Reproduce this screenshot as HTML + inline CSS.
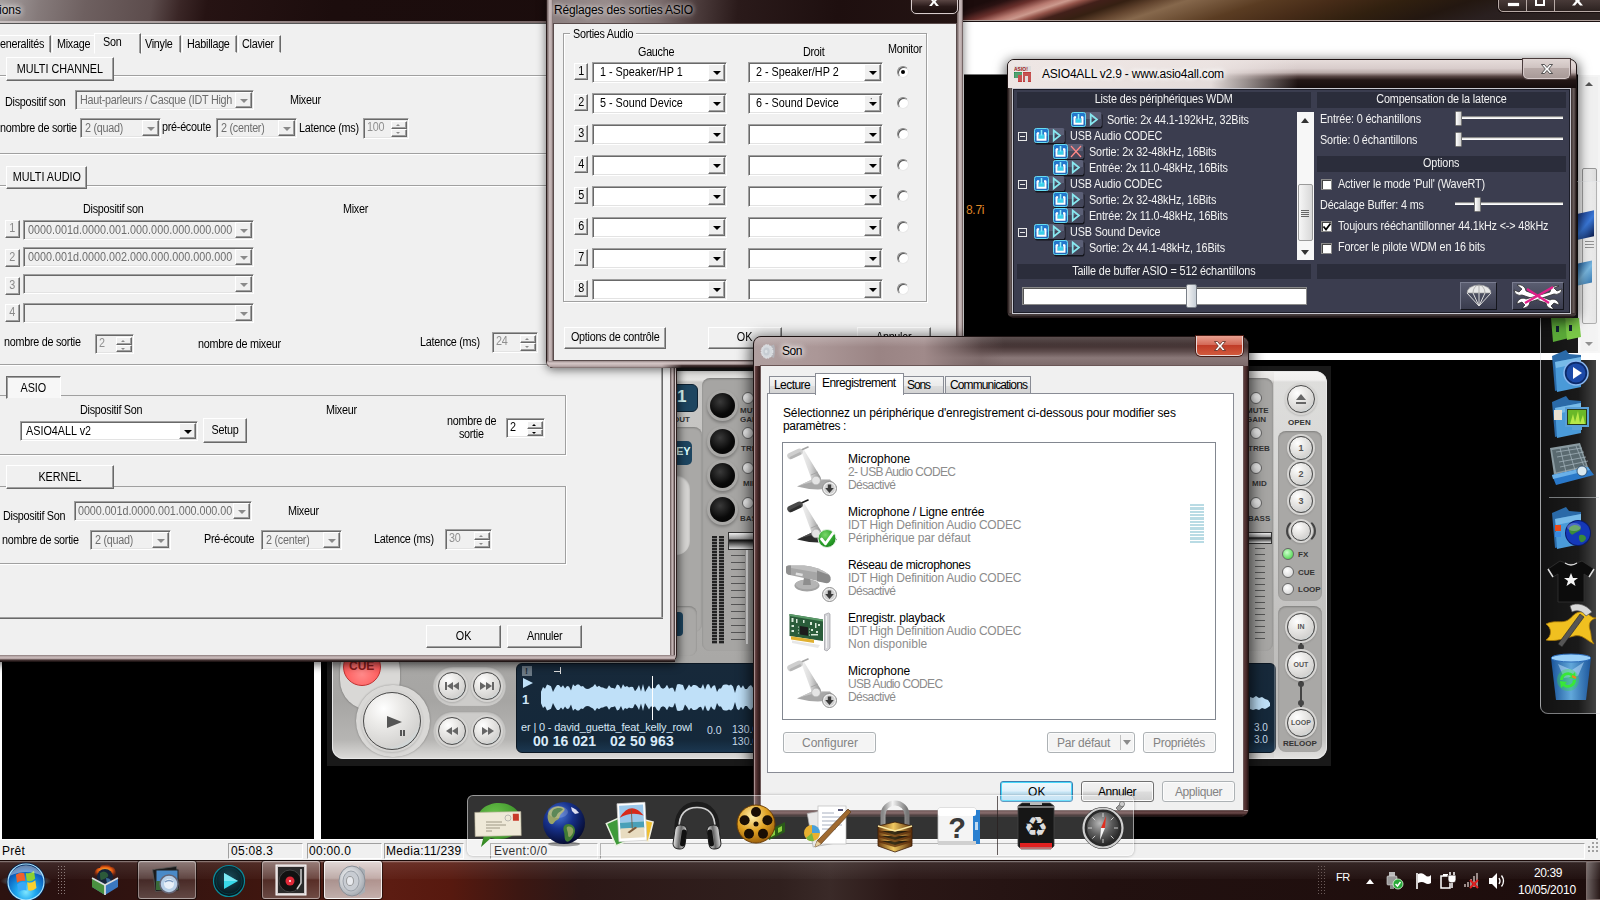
<!DOCTYPE html>
<html lang="fr">
<head>
<meta charset="utf-8">
<title>Bureau</title>
<style>
*{box-sizing:border-box;margin:0;padding:0}
html,body{width:1600px;height:900px;overflow:hidden;background:#000}
body{position:relative;font-family:"Liberation Sans",sans-serif;font-size:12px;color:#000}
.abs{position:absolute}
.t{position:absolute;white-space:nowrap;line-height:14px;letter-spacing:-0.3px;transform:scaleX(.9);transform-origin:0 50%}
.nx{display:inline-block;transform:scaleX(.9);transform-origin:50% 50%}
/* ---------- wallpaper / main app ---------- */
#wall{left:0;top:0;width:1600px;height:900px;background:#1a0b09}
#mainTitle{left:0;top:0;width:1600px;height:22px;border-bottom:1px solid #1a1010;box-shadow:inset 0 -1px 0 #b0a29e;background:linear-gradient(161.6deg,#1c0c0c 10.2px,#1c0c0c 312.9px,#2a1212 318.3px,#6a302c 326.2px,#b87a70 333.2px,#cc9a8e 337.6px,#94544a 342.0px,#42201a 347.7px,#352012 356.2px,#62442e 365.7px,#86684c 375.2px,#73553a 386.2px,#5a3c22 400.5px,#472c18 421.0px,#31200f 443.1px,#231710 465.2px,#2a2020 484.2px,#2e2422 515.8px)}
#mainClient{left:0;top:22px;width:1600px;height:838px;background:#fff}
.blk{position:absolute;background:#000}
/* ---------- generic classic controls ---------- */
.face{background:#f0f0f0}
.btn{position:absolute;background:#f0f0f0;border:1px solid;border-color:#fff #696969 #696969 #fff;box-shadow:inset -1px -1px 0 #a0a0a0,inset 1px 1px 0 #f0f0f0;text-align:center;white-space:nowrap;letter-spacing:-0.3px}
.btn span{position:relative}
.cb{position:absolute;border:1px solid;border-color:#a0a0a0 #fff #fff #a0a0a0;background:#fff;box-shadow:inset 1px 1px 0 #696969,inset -1px -1px 0 #e3e3e3}
.cb.dis{background:#f0f0f0;color:#6d6d6d}
.cb .tx{position:absolute;left:4px;top:2px;line-height:15px;white-space:nowrap;letter-spacing:-0.3px;overflow:hidden;transform:scaleX(.9);transform-origin:0 50%}
.cb .ar{position:absolute;right:1px;top:1px;bottom:1px;width:17px;background:#f0f0f0;border:1px solid;border-color:#fff #696969 #696969 #fff;box-shadow:inset -1px -1px 0 #a0a0a0}
.cb .ar:after{content:"";position:absolute;left:4px;top:6px;border:4px solid transparent;border-top:4px solid #000;border-bottom:0}
.cb.dis .ar:after{border-top-color:#8a8a8a}
.sp{position:absolute;border:1px solid;border-color:#a0a0a0 #fff #fff #a0a0a0;background:#fff;box-shadow:inset 1px 1px 0 #696969,inset -1px -1px 0 #e3e3e3}
.sp.dis{background:#f0f0f0;color:#8f8f8f}
.sp .tx{position:absolute;left:3px;top:1px;line-height:15px;letter-spacing:-0.3px;transform:scaleX(.9);transform-origin:0 50%}
.sp .ud{position:absolute;right:1px;top:2px;bottom:1px;width:16px}
.sp .ud i{position:absolute;left:0;right:0;height:50%;background:#f0f0f0;border:1px solid;border-color:#fff #696969 #696969 #fff;box-shadow:inset -1px -1px 0 #a0a0a0}
.sp .ud i:first-child{top:0}.sp .ud i:last-child{bottom:0}
.sp .ud i:after{content:"";position:absolute;left:4px;top:2px;border:2px solid transparent}
.sp .ud i:first-child:after{border-bottom:2px solid #000;border-top:0;top:2px}
.sp .ud i:last-child:after{border-top:2px solid #000;border-bottom:0;top:2px}
.sp.dis .ud i:first-child:after{border-bottom-color:#8a8a8a}
.sp.dis .ud i:last-child:after{border-top-color:#8a8a8a}
.hl{position:absolute;height:2px;border-top:1px solid #a0a0a0;border-bottom:1px solid #fff}
.vl{position:absolute;width:2px;border-left:1px solid #a0a0a0;border-right:1px solid #fff}
</style>
</head>
<body>
<div id="wall" class="abs"></div>
<div id="mainTitle" class="abs"></div>
<div id="mainClient" class="abs"></div>

<!-- ===== main application (maximised, behind everything) ===== -->
<div class="abs" style="left:1498px;top:-2px;width:104px;height:14px;border:1px solid #b8aaa6;border-radius:0 0 0 5px;background:linear-gradient(#4a3c3a,#2c2220);box-shadow:0 0 0 1px rgba(20,10,10,.8)"></div>
<div class="abs" style="left:1526px;top:0;width:1px;height:11px;background:#b8aaa6"></div>
<div class="abs" style="left:1554px;top:0;width:1px;height:11px;background:#b8aaa6"></div>
<div class="abs" style="left:1508px;top:3px;width:11px;height:3px;background:#fff;box-shadow:0 0 1px #fff"></div>
<div class="abs" style="left:1535px;top:-4px;width:10px;height:10px;border:2px solid #fff"></div>
<svg class="abs" style="left:1570px;top:-5px" width="15" height="12" viewBox="0 0 14 12"><path d="M1.500 1.500h3l2.500 3 2.500-3h3L8.700 6l3.800 4.500h-3L7 7.500l-2.500 3h-3L5.300 6z" fill="#fff"/></svg>
<div class="blk" style="left:964px;top:74px;width:614px;height:279px;border-top:1px solid #777"></div>
<div class="t" style="left:966px;top:203px;color:#e08a28;font-size:12px;letter-spacing:-0.3px;transform:none">8.7i</div>
<!-- vertical scrollbar of upper pane -->
<div class="abs" style="left:1578px;top:75px;width:22px;height:278px;background:#f4f4f4"></div>
<div class="abs" style="left:1581px;top:77px;width:17px;height:274px;background:#f0f0f0"></div>
<div class="abs" style="left:1582px;top:168px;width:15px;height:156px;border:1px solid #979797;border-radius:2px;background:linear-gradient(90deg,#f4f4f4,#dcdcdc)"></div>
<div class="abs" style="left:1585px;top:82px;border:4px solid transparent;border-bottom:4px solid #555;border-top:0"></div>
<div class="abs" style="left:1585px;top:342px;border:4px solid transparent;border-top:4px solid #777;border-bottom:0"></div>
<div class="abs" style="left:1585px;top:241px;width:9px;height:1px;background:#777;box-shadow:0 3px #777,0 6px #777"></div>
<!-- lower pane -->
<div class="blk" style="left:2px;top:360px;width:312px;height:479px"></div>
<div class="blk" style="left:321px;top:360px;width:1275px;height:479px"></div>
<!-- status bar -->
<div class="abs face" style="left:0;top:839px;width:1600px;height:21px;border-top:1px solid #fff"></div>
<div class="t" style="left:2px;top:844px;font-size:12px;letter-spacing:.3px;transform:none">Prêt</div>
<div class="abs" style="left:228px;top:843px;width:75px;height:16px;border:1px solid;border-color:#a0a0a0 #fff #fff #a0a0a0"></div>
<div class="t" style="left:231px;top:844px;font-size:12px;letter-spacing:.3px;transform:none">05:08.3</div>
<div class="abs" style="left:307px;top:843px;width:75px;height:16px;border:1px solid;border-color:#a0a0a0 #fff #fff #a0a0a0"></div>
<div class="t" style="left:309px;top:844px;font-size:12px;letter-spacing:.3px;transform:none">00:00.0</div>
<div class="abs" style="left:384px;top:843px;width:80px;height:16px;border:1px solid;border-color:#a0a0a0 #fff #fff #a0a0a0"></div>
<div class="t" style="left:386px;top:844px;font-size:12px;letter-spacing:.3px;transform:none">Media:11/239</div>
<div class="abs" style="left:490px;top:843px;width:108px;height:16px;border:1px solid;border-color:#a0a0a0 #fff #fff #a0a0a0"></div>
<div class="t" style="left:494px;top:844px;font-size:12px;letter-spacing:.3px;transform:none">Event:0/0</div>
<div class="abs" style="left:600px;top:843px;width:985px;height:16px;border:1px solid;border-color:#a0a0a0 #fff #fff #a0a0a0"></div>

<style>
.rb{position:absolute;border-radius:50%;border:1px solid #4a4a4a;background:radial-gradient(circle at 35% 28%,#fff 0,#ecebe9 30%,#d4d3d1 70%,#c8e4ee 100%);box-shadow:0 0 0 2px #d6d5d3,0 1px 2px 2px rgba(0,0,0,.15)}
.rb b{position:absolute;left:0;right:0;text-align:center;font-size:7px;color:#555;letter-spacing:0;font-weight:bold}
.kn{position:absolute;border-radius:50%;background:radial-gradient(circle at 40% 35%,#3a3a3a 0,#0a0a0a 55%,#000 100%);box-shadow:0 0 0 3px #a9a8a6,0 2px 3px 3px rgba(0,0,0,.25)}
.pt{position:absolute;font-size:8px;font-weight:bold;color:#333;letter-spacing:0;white-space:nowrap;line-height:9px}
.led{position:absolute;width:12px;height:12px;border-radius:50%;border:1px solid #666;background:radial-gradient(circle at 40% 35%,#fff,#cfcfcf)}
.grp{position:absolute;background:#a9a8a6;border-radius:8px;box-shadow:inset 0 1px 2px rgba(0,0,0,.25)}
</style>
<div class="abs" style="left:327px;top:366px;width:1004px;height:400px;background:#191919"></div>
<div class="abs" style="left:332px;top:371px;width:995px;height:388px;border-radius:12px;background:linear-gradient(#eeedeb 0,#e6e5e3 9px,#c9c8c6 11px,#c2c1bf 25%,#adacaa 60%,#a6a5a3 85%,#b6b5b3 95%,#dddcda 100%);box-shadow:inset 0 0 0 1px #e8e8e8"></div>
<!-- transport (bottom-left) -->
<div class="abs" style="left:340px;top:640px;width:60px;height:70px;border-radius:30px;background:#d9d8d6;box-shadow:0 0 2px rgba(0,0,0,.4)"></div>
<div class="abs" style="left:356px;top:685px;width:74px;height:72px;border-radius:37px;background:#d9d8d6;box-shadow:0 0 2px rgba(0,0,0,.35)"></div>
<div class="abs" style="left:343px;top:648px;width:38px;height:38px;border-radius:50%;background:radial-gradient(circle at 50% 70%,#ff8a8a,#ff5a5a 60%,#e84848);border:1px solid #c03030"></div>
<div class="pt" style="left:349px;top:660px;font-size:12px;color:#8a1c1c;line-height:12px">CUE</div>
<div class="rb" style="left:363px;top:692px;width:58px;height:58px"></div>
<div class="abs" style="left:387px;top:716px;border:6px solid transparent;border-left:15px solid #555;border-right:0"></div>
<div class="abs" style="left:400px;top:730px;width:2px;height:6px;background:#555;box-shadow:3px 0 #555"></div>
<div class="grp" style="left:433px;top:666px;width:73px;height:40px;border-radius:20px;background:#cdccca"></div>
<div class="grp" style="left:433px;top:711px;width:73px;height:40px;border-radius:20px;background:#cdccca"></div>
<div class="rb" style="left:438px;top:672px;width:28px;height:28px"></div><div class="rb" style="left:473px;top:672px;width:28px;height:28px"></div><div class="rb" style="left:438px;top:717px;width:28px;height:28px"></div><div class="rb" style="left:473px;top:717px;width:28px;height:28px"></div>
<svg class="abs" style="left:433px;top:666px" width="73" height="86" viewBox="0 0 73 86">
<g fill="#666"><rect x="12" y="16" width="2" height="8"/><path d="M20 16v8l-6-4zM26 16v8l-6-4z"/>
<path d="M47 16v8l6-4zM53 16v8l6-4z"/><rect x="59" y="16" width="2" height="8"/>
<path d="M19 61v8l-6-4zM25 61v8l-6-4z"/><path d="M49 61v8l6-4zM55 61v8l6-4z"/></g></svg>
<!-- display -->
<div class="abs" style="left:516px;top:663px;width:760px;height:90px;border-radius:6px;background:linear-gradient(#17293a 0,#14283a 86%,#1b3750 100%);border:1px solid #0c1824"></div>
<svg class="abs" style="left:0;top:0" width="1600" height="900"><polygon points="541,691.8 543,687.0 545,688.7 547,684.4 549,685.2 551,686.3 553,692.1 555,687.9 557,684.9 559,685.0 561,687.5 563,685.3 565,688.6 567,686.0 569,686.5 571,690.6 573,684.3 575,686.3 577,684.5 579,684.6 581,686.5 583,686.0 585,688.2 587,688.9 589,688.8 591,687.6 593,686.6 595,684.0 597,686.9 599,685.8 601,687.2 603,687.4 605,688.5 607,688.7 609,685.2 611,687.8 613,688.1 615,688.8 617,684.5 619,685.3 621,688.9 623,684.2 625,686.9 627,685.9 629,687.5 631,686.8 633,687.1 635,691.3 637,688.8 639,685.1 641,691.5 643,684.1 645,692.0 647,688.7 649,685.6 651,688.8 653,687.8 655,688.4 657,685.1 659,684.1 661,687.8 663,688.8 665,687.8 667,684.8 669,688.8 671,687.8 673,687.8 675,692.3 677,684.4 679,684.0 681,684.5 683,685.0 685,690.5 687,687.9 689,684.5 691,687.3 693,685.0 695,684.9 697,685.7 699,687.7 701,688.2 703,684.1 705,689.7 707,684.5 709,684.2 711,688.7 713,685.8 715,685.3 717,691.9 719,688.4 721,688.6 723,685.0 725,684.6 727,684.6 729,685.6 731,684.5 733,686.6 735,692.9 737,686.0 739,684.7 741,688.3 743,685.2 745,688.9 747,688.9 749,686.3 751,685.1 753,687.8 755,688.2 757,688.4 759,684.6 759,710.4 757,706.6 755,706.8 753,707.2 751,709.9 749,708.7 747,706.1 745,706.1 743,709.8 741,706.7 739,710.3 737,709.0 735,702.1 733,708.4 731,710.5 729,709.4 727,710.4 725,710.4 723,710.0 721,706.4 719,706.6 717,703.1 715,709.7 713,709.2 711,706.3 709,710.8 707,710.5 705,705.3 703,710.9 701,706.8 699,707.3 697,709.3 695,710.1 693,710.0 691,707.7 689,710.5 687,707.1 685,704.5 683,710.0 681,710.5 679,711.0 677,710.6 675,702.7 673,707.2 671,707.2 669,706.2 667,710.2 665,707.2 663,706.2 661,707.2 659,710.9 657,709.9 655,706.6 653,707.2 651,706.2 649,709.4 647,706.3 645,703.0 643,710.9 641,703.5 639,709.9 637,706.2 635,703.7 633,707.9 631,708.2 629,707.5 627,709.1 625,708.1 623,710.8 621,706.1 619,709.7 617,710.5 615,706.2 613,706.9 611,707.2 609,709.8 607,706.3 605,706.5 603,707.6 601,707.8 599,709.2 597,708.1 595,711.0 593,708.4 591,707.4 589,706.2 587,706.1 585,706.8 583,709.0 581,708.5 579,710.4 577,710.5 575,708.7 573,710.7 571,704.4 569,708.5 567,709.0 565,706.4 563,709.7 561,707.5 559,710.0 557,710.1 555,707.1 553,702.9 551,708.7 549,709.8 547,710.6 545,706.3 543,708.0 541,703.2" fill="#bfe0f8"/>
<rect x="652" y="676" width="1" height="44" fill="#fff"/>
<rect x="522" y="666" width="10" height="10" fill="#6a7884"/><path d="M523 678l10 5-10 5z" fill="#bfe0f8"/>
<rect x="554" y="671" width="6" height="1" fill="#ddd"/><rect x="560" y="667" width="1" height="7" fill="#ddd"/>
</svg>
<div class="pt" style="left:525px;top:667px;color:#1a2a38;font-size:9px">!</div>
<div class="pt" style="left:522px;top:693px;color:#cfe6f8;font-size:13px;line-height:13px">1</div>
<div class="t" style="left:521px;top:720px;transform:none;font-size:11px;letter-spacing:-0.15px;color:#d4e6f4">er | 0 - david_guetta_feat_kelly_rowl</div>
<div class="t" style="left:707px;top:723px;color:#c8dcec;font-size:10.5px;letter-spacing:0;transform:none">0.0</div>
<div class="t" style="left:732px;top:723px;color:#c8dcec;font-size:10.5px;letter-spacing:0;line-height:12px;transform:none">130.0<br>130.0</div>
<div class="t" style="left:533px;top:734px;transform:none;font-size:14px;letter-spacing:0.08px;font-weight:bold;color:#d8eaf8">00 16 021</div>
<div class="t" style="left:610px;top:734px;transform:none;font-size:14px;letter-spacing:0.19px;font-weight:bold;color:#d8eaf8">02 50 963</div>
<!-- middle strip visible between dialogs -->
<div class="abs" style="left:676px;top:384px;width:22px;height:28px;border-radius:0 6px 6px 0;background:#1d4560;border:1px solid #0e2233"></div>
<div class="pt" style="left:677px;top:388px;color:#dff;font-size:17px;line-height:18px">1</div>
<div class="pt" style="left:673px;top:415px;font-size:8px">OUT</div>
<div class="grp" style="left:660px;top:427px;width:42px;height:205px"></div>
<div class="abs" style="left:676px;top:441px;width:16px;height:24px;border-radius:0 5px 5px 0;background:#1d4560"></div>
<div class="pt" style="left:676px;top:445px;color:#dff;font-size:11px;line-height:12px">EY</div>
<div class="grp" style="left:660px;top:475px;width:30px;height:80px;border-radius:14px;background:#d6d5d3"></div>
<div class="grp" style="left:660px;top:606px;width:37px;height:50px"></div>
<div class="abs" style="left:676px;top:612px;width:7px;height:24px;border-radius:0 4px 4px 0;background:#1d4560"></div>
<div class="grp" style="left:702px;top:378px;width:80px;height:273px;background:#a6a5a3"></div>
<div class="kn" style="left:710px;top:393px;width:25px;height:25px"></div>
<div class="kn" style="left:710px;top:429px;width:25px;height:25px"></div>
<div class="kn" style="left:710px;top:463px;width:25px;height:25px"></div>
<div class="kn" style="left:710px;top:497px;width:25px;height:25px"></div>
<div class="led" style="left:742px;top:392px"></div><div class="led" style="left:742px;top:427px"></div>
<div class="led" style="left:742px;top:462px"></div><div class="led" style="left:742px;top:497px"></div>
<div class="pt" style="left:740px;top:406px">MUTE<br>GAIN</div><div class="pt" style="left:741px;top:444px">TREB</div>
<div class="pt" style="left:743px;top:479px">MID</div><div class="pt" style="left:740px;top:514px">BASS</div>
<div class="abs" style="left:712px;top:536px;width:5px;height:108px;background:repeating-linear-gradient(#222 0,#222 2px,#777 2px,#777 3px)"></div>
<div class="abs" style="left:719px;top:536px;width:5px;height:108px;background:repeating-linear-gradient(#222 0,#222 2px,#777 2px,#777 3px)"></div>
<div class="abs" style="left:731px;top:555px;width:14px;height:88px;background:repeating-linear-gradient(#555 0,#555 1px,transparent 1px,transparent 7px)"></div>
<div class="abs" style="left:746px;top:548px;width:2px;height:96px;background:#e8e8e8"></div>
<div class="abs" style="left:728px;top:532px;width:40px;height:18px;background:linear-gradient(#eee 0,#999 35%,#111 45%,#333 55%,#ddd 100%);border:1px solid #333"></div>
<svg class="abs" style="left:1250px;top:692px" width="22" height="24"><path d="M0 5l3 1 3-2 3 2 3-1 3 2 3 1 2 3v3l-3 2-2 1-3-1-3 2-3-1-3 1-3-1z" fill="#bfe0f8"/></svg>
<div class="t" style="left:1254px;top:722px;color:#c8dcec;font-size:10px;letter-spacing:0;line-height:12px;transform:none">3.0<br>3.0</div>
<div class="abs" style="left:1274px;top:372px;width:52px;height:386px;border-radius:0 11px 11px 0;background:linear-gradient(rgba(255,255,255,.4),rgba(255,255,255,.28) 60%,rgba(255,255,255,.2))"></div>
<!-- right strip -->
<div class="grp" style="left:1232px;top:378px;width:41px;height:273px;background:#a6a5a3"></div>
<div class="led" style="left:1250px;top:392px"></div><div class="led" style="left:1250px;top:427px"></div>
<div class="led" style="left:1250px;top:462px"></div><div class="led" style="left:1250px;top:497px"></div>
<div class="pt" style="left:1246px;top:406px">MUTE<br>GAIN</div><div class="pt" style="left:1248px;top:444px">TREB</div>
<div class="pt" style="left:1252px;top:479px">MID</div><div class="pt" style="left:1248px;top:514px">BASS</div>
<div class="abs" style="left:1246px;top:532px;width:26px;height:12px;background:linear-gradient(#eee 0,#999 35%,#111 50%,#444 60%,#ddd 100%);border:1px solid #333"></div>
<div class="abs" style="left:1255px;top:548px;width:10px;height:96px;background:repeating-linear-gradient(#555 0,#555 1px,transparent 1px,transparent 6px)"></div>
<div class="rb" style="left:1287px;top:385px;width:28px;height:28px"></div>
<svg class="abs" style="left:1294px;top:392px" width="14" height="14"><path d="M7 2l5 6H2z" fill="#666"/><rect x="2" y="10" width="10" height="2" fill="#666"/></svg>
<div class="pt" style="left:1288px;top:418px">OPEN</div>
<div class="grp" style="left:1278px;top:431px;width:44px;height:170px"></div>
<div class="rb" style="left:1289px;top:436px;width:24px;height:24px"><b style="top:6px;font-size:9px">1</b></div><div class="rb" style="left:1289px;top:462px;width:24px;height:24px"><b style="top:6px;font-size:9px">2</b></div><div class="rb" style="left:1289px;top:489px;width:24px;height:24px"><b style="top:6px;font-size:9px">3</b></div>
<div class="abs" style="left:1286px;top:518px;width:30px;height:26px;border-radius:50%;border:2px solid #444;border-top-color:transparent;border-bottom-color:transparent"></div>
<div class="rb" style="left:1291px;top:521px;width:20px;height:20px"></div>
<div class="led" style="left:1282px;top:548px;background:radial-gradient(circle at 40% 35%,#cfc,#3c3)"></div>
<div class="led" style="left:1282px;top:566px"></div><div class="led" style="left:1282px;top:583px"></div>
<div class="pt" style="left:1298px;top:550px">FX</div><div class="pt" style="left:1298px;top:568px">CUE</div><div class="pt" style="left:1298px;top:585px">LOOP</div>
<div class="grp" style="left:1278px;top:606px;width:44px;height:146px"></div>
<div class="abs" style="left:1300px;top:640px;width:2px;height:70px;background:#444"></div>
<div class="abs" style="left:1298px;top:644px;width:6px;height:6px;border-radius:50%;background:#444"></div>
<div class="abs" style="left:1298px;top:681px;width:6px;height:6px;border-radius:50%;background:#444"></div>
<div class="abs" style="left:1298px;top:700px;width:6px;height:6px;border-radius:50%;background:#444"></div>
<div class="rb" style="left:1287px;top:613px;width:28px;height:28px"><b style="top:9px">IN</b></div><div class="rb" style="left:1287px;top:651px;width:28px;height:28px"><b style="top:9px">OUT</b></div><div class="rb" style="left:1287px;top:709px;width:28px;height:28px"><b style="top:9px">LOOP</b></div>
<div class="pt" style="left:1283px;top:739px">RELOOP</div>


<!-- ===== Options dialog ===== -->
<div id="optWin" class="abs" style="left:-10px;top:-6px;width:687px;height:668px;border-radius:7px;border:1px solid #2a1c1c;background:#b9a9a9;box-shadow:0 0 0 1px rgba(255,255,255,.35) inset,2px 3px 8px rgba(0,0,0,.6)"></div>
<div class="abs" style="left:0;top:0;width:675px;height:23px;background:linear-gradient(100deg,#a59f9f 0,#9a9292 14px,#857a7a 40px,#6e6060 85px,#5c4c4c 150px,#3a2626 178px,#261313 205px,#1c0d0d 330px,#1a0c0c 100%)"></div>
<div class="abs" style="left:0;top:21px;width:675px;height:2px;background:linear-gradient(90deg,#c8c0c0,#8a7a7a 50%,#6a5a5a)"></div>
<div class="abs" style="left:669px;top:23px;width:6px;height:633px;background:linear-gradient(90deg,#2a1c1c 0,#6a5a5a 20%,#cbbcbc 55%,#8a7a7a 80%,#2a1c1c 100%)"></div>
<div class="abs" style="left:0;top:655px;width:675px;height:7px;background:linear-gradient(#8a7a7a 0,#cbbcbc 30%,#b5a5a5 55%,#4a3838 70%,#140c0c 100%)"></div>
<div class="abs face" style="left:0;top:23px;width:670px;height:632px;border-top:1px solid #555"></div>
<div class="t" style="left:-1px;top:3px;font-size:12px;letter-spacing:0;transform:none;text-shadow:0 0 6px #fff,0 0 6px #fff">ions</div>
<div class="abs face" style="left:-6px;top:35px;width:57px;height:18px;border:1px solid;border-color:#fff #696969 transparent #fff;box-shadow:inset -1px 0 0 #a0a0a0"></div><div class="t" style="left:0px;top:37px;">eneralités</div>
<div class="abs face" style="left:52px;top:35px;width:44px;height:18px;border:1px solid;border-color:#fff #696969 transparent #fff;box-shadow:inset -1px 0 0 #a0a0a0"></div><div class="t" style="left:57px;top:37px;">Mixage</div>
<div class="abs face" style="left:141px;top:35px;width:40px;height:18px;border:1px solid;border-color:#fff #696969 transparent #fff;box-shadow:inset -1px 0 0 #a0a0a0"></div><div class="t" style="left:145px;top:37px;">Vinyle</div>
<div class="abs face" style="left:182px;top:35px;width:55px;height:18px;border:1px solid;border-color:#fff #696969 transparent #fff;box-shadow:inset -1px 0 0 #a0a0a0"></div><div class="t" style="left:187px;top:37px;">Habillage</div>
<div class="abs face" style="left:238px;top:35px;width:43px;height:18px;border:1px solid;border-color:#fff #696969 transparent #fff;box-shadow:inset -1px 0 0 #a0a0a0"></div><div class="t" style="left:242px;top:37px;">Clavier</div>
<div class="abs face" style="left:94px;top:33px;width:47px;height:21px;border:1px solid;border-color:#fff #696969 transparent #fff;box-shadow:inset -1px 0 0 #a0a0a0"></div><div class="t" style="left:103px;top:35px;">Son</div>
<div class="vl" style="left:661px;top:53px;height:566px;border-left-color:#a0a0a0;border-right-color:#696969"></div>
<div class="hl" style="left:0;top:617px;width:663px;border-top-color:#a0a0a0;border-bottom-color:#696969"></div>
<div class="hl" style="left:0;top:75px;width:662px"></div>
<div class="btn" style="left:6px;top:57px;width:108px;height:24px;line-height:21px;letter-spacing:0;line-height:22px"><span class="nx">MULTI CHANNEL</span></div>
<div class="t" style="left:5px;top:95px;">Dispositif son</div>
<div class="cb dis" style="left:75px;top:90px;width:179px;height:20px"><span class="tx" style="width:176px;">Haut-parleurs / Casque (IDT High</span><span class="ar"></span></div>
<div class="t" style="left:290px;top:93px;">Mixeur</div>
<div class="t" style="left:0px;top:121px;">nombre de sortie</div>
<div class="cb dis" style="left:80px;top:118px;width:81px;height:20px"><span class="tx" style="">2 (quad)</span><span class="ar"></span></div>
<div class="t" style="left:162px;top:120px;">pré-écoute</div>
<div class="cb dis" style="left:216px;top:118px;width:81px;height:20px"><span class="tx" style="">2 (center)</span><span class="ar"></span></div>
<div class="t" style="left:299px;top:121px;">Latence (ms)</div>
<div class="sp dis" style="left:363px;top:118px;width:46px;height:21px"><span class="tx">100</span><span class="ud"><i></i><i></i></span></div>
<div class="hl" style="left:0;top:153px;width:662px"></div>
<div class="hl" style="left:0;top:185px;width:662px"></div>
<div class="btn" style="left:6px;top:166px;width:81px;height:23px;line-height:20px;letter-spacing:0"><span class="nx">MULTI AUDIO</span></div>
<div class="t" style="left:83px;top:202px;">Dispositif son</div>
<div class="t" style="left:343px;top:202px;">Mixer</div>
<div class="btn" style="left:5px;top:220px;width:15px;height:18px;line-height:15px;color:#8a8a8a;letter-spacing:0"><span class="nx">1</span></div>
<div class="cb dis" style="left:23px;top:220px;width:231px;height:20px"><span class="tx" style="letter-spacing:0px;">0000.001d.0000.001.000.000.000.000.000</span><span class="ar"></span></div>
<div class="btn" style="left:5px;top:249px;width:15px;height:18px;line-height:15px;color:#8a8a8a;letter-spacing:0"><span class="nx">2</span></div>
<div class="cb dis" style="left:23px;top:247px;width:231px;height:20px"><span class="tx" style="letter-spacing:0px;">0000.001d.0000.002.000.000.000.000.000</span><span class="ar"></span></div>
<div class="btn" style="left:5px;top:277px;width:15px;height:18px;line-height:15px;color:#8a8a8a;letter-spacing:0"><span class="nx">3</span></div>
<div class="cb dis" style="left:23px;top:274px;width:231px;height:20px"><span class="tx" style="letter-spacing:0px;"></span><span class="ar"></span></div>
<div class="btn" style="left:5px;top:304px;width:15px;height:18px;line-height:15px;color:#8a8a8a;letter-spacing:0"><span class="nx">4</span></div>
<div class="cb dis" style="left:23px;top:303px;width:231px;height:20px"><span class="tx" style="letter-spacing:0px;"></span><span class="ar"></span></div>
<div class="t" style="left:4px;top:335px;">nombre de sortie</div>
<div class="sp dis" style="left:95px;top:334px;width:39px;height:20px"><span class="tx">2</span><span class="ud"><i></i><i></i></span></div>
<div class="t" style="left:198px;top:337px;">nombre de mixeur</div>
<div class="t" style="left:420px;top:335px;">Latence (ms)</div>
<div class="sp dis" style="left:492px;top:332px;width:46px;height:21px"><span class="tx">24</span><span class="ud"><i></i><i></i></span></div>
<div class="hl" style="left:0;top:364px;width:662px"></div>
<div class="abs" style="left:0;top:395px;width:567px;height:61px;border:1px solid #fff;border-left:0"></div>
<div class="abs" style="left:0;top:395px;width:566px;height:60px;border:1px solid #a0a0a0;border-left:0"></div>
<div class="abs face" style="left:6px;top:376px;width:55px;height:23px;background:#f7f7f7;border:1px solid;border-color:#696969 #fff #f0f0f0 #696969;box-shadow:inset 1px 1px 0 #a0a0a0;text-align:center;line-height:23px"><span class="nx">ASIO</span></div>
<div class="t" style="left:80px;top:403px;">Dispositif Son</div>
<div class="t" style="left:326px;top:403px;">Mixeur</div>
<div class="cb" style="left:20px;top:421px;width:178px;height:20px"><span class="tx" style="letter-spacing:0px;left:5px;">ASIO4ALL v2</span><span class="ar"></span></div>
<div class="btn" style="left:203px;top:418px;width:44px;height:25px;line-height:22px;"><span class="nx">Setup</span></div>
<div class="t" style="left:447px;top:415px;text-align:center;line-height:13px;width:54px">nombre de<br>sortie</div>
<div class="sp" style="left:506px;top:418px;width:39px;height:20px"><span class="tx">2</span><span class="ud"><i></i><i></i></span></div>
<div class="abs" style="left:0;top:486px;width:567px;height:79px;border:1px solid #fff;border-left:0"></div>
<div class="abs" style="left:0;top:486px;width:566px;height:78px;border:1px solid #a0a0a0;border-left:0"></div>
<div class="btn" style="left:6px;top:465px;width:108px;height:24px;line-height:21px;letter-spacing:0;line-height:22px"><span class="nx">KERNEL</span></div>
<div class="t" style="left:3px;top:509px;">Dispositif Son</div>
<div class="cb dis" style="left:74px;top:501px;width:178px;height:20px"><span class="tx" style="letter-spacing:-0.08px;left:3px;">0000.001d.0000.001.000.000.00</span><span class="ar"></span></div>
<div class="t" style="left:288px;top:504px;">Mixeur</div>
<div class="t" style="left:2px;top:533px;">nombre de sortie</div>
<div class="cb dis" style="left:90px;top:530px;width:81px;height:20px"><span class="tx" style="">2 (quad)</span><span class="ar"></span></div>
<div class="t" style="left:204px;top:532px;">Pré-écoute</div>
<div class="cb dis" style="left:261px;top:530px;width:81px;height:20px"><span class="tx" style="">2 (center)</span><span class="ar"></span></div>
<div class="t" style="left:374px;top:532px;">Latence (ms)</div>
<div class="sp dis" style="left:445px;top:529px;width:47px;height:21px"><span class="tx">30</span><span class="ud"><i></i><i></i></span></div>
<div class="btn" style="left:426px;top:625px;width:75px;height:23px;line-height:20px;letter-spacing:0"><span class="nx">OK</span></div>
<div class="btn" style="left:507px;top:625px;width:75px;height:23px;line-height:20px;"><span class="nx">Annuler</span></div>
<!-- ===== Réglages des sorties ASIO ===== -->
<div class="abs" style="left:546px;top:-8px;width:417px;height:376px;border-radius:7px;border:1px solid #2a1c1c;background:#bcaeae;box-shadow:inset 0 0 0 1px rgba(255,255,255,.45),0 2px 10px rgba(0,0,0,.55)"></div>
<div class="abs" style="left:547px;top:0px;width:415px;height:23px;background:linear-gradient(95deg,#8a7e7e 0,#988c8c 14%,#7c6e6e 27%,#4c3c3c 36%,#2a1a1a 46%,#1e0f0f 70%,#241413 100%)"></div>
<div class="abs" style="left:547px;top:0px;width:6px;height:366px;background:linear-gradient(90deg,#6e5f5e,#cdbfbf 45%,#b3a4a4 80%,#6a5a5a)"></div>
<div class="abs" style="left:957px;top:0px;width:6px;height:366px;background:linear-gradient(90deg,#6e5f5e,#cdbfbf 45%,#b3a4a4 80%,#4a3a3a)"></div>
<div class="abs" style="left:547px;top:361px;width:415px;height:7px;border-radius:0 0 6px 6px;background:linear-gradient(#8a7a7a 0,#cbbcbc 25%,#b5a5a5 45%,#4a3838 62%,#140c0c 100%)"></div>
<div class="abs" style="left:547px;top:361px;width:135px;height:7px;border-radius:0 0 0 6px;background:linear-gradient(#9a8a8a 0,#d4c6c6 30%,#c4b4b4 60%,#a89898 85%,#6a5a5a 100%);-webkit-mask-image:linear-gradient(90deg,#000 85%,transparent);mask-image:linear-gradient(90deg,#000 85%,transparent)"></div>
<div class="abs face" style="left:553px;top:23px;width:404px;height:338px;border:1px solid #5a4c4c"></div>
<div class="t" style="left:554px;top:3px;font-size:12px;letter-spacing:-0.18px;transform:none;text-shadow:0 0 6px rgba(255,255,255,.7),0 0 4px rgba(255,255,255,.6)">Réglages des sorties ASIO</div>
<div class="abs" style="left:911px;top:-1px;width:47px;height:15px;border:1px solid #d8cccc;border-radius:0 0 5px 5px;background:linear-gradient(#5a4644,#2a1a19 50%,#1a0e0d);box-shadow:0 0 0 1px #2a1c1c"></div>
<div class="t" style="left:929px;top:-6px;color:#fff;font-weight:bold;font-size:15px;letter-spacing:0;transform:scaleX(1.2)">x</div>
<div class="abs" style="left:564px;top:34px;width:364px;height:269px;border:1px solid #fff"></div>
<div class="abs" style="left:563px;top:33px;width:364px;height:269px;border:1px solid #a0a0a0"></div>
<div class="abs face" style="left:570px;top:27px;width:66px;height:14px;"></div>
<div class="t" style="left:573px;top:27px;">Sorties Audio</div>
<div class="t" style="left:638px;top:45px;">Gauche</div>
<div class="t" style="left:803px;top:45px;">Droit</div>
<div class="t" style="left:888px;top:42px;">Monitor</div>
<div class="btn" style="left:574px;top:63px;width:14px;height:17px;line-height:14px;letter-spacing:0"><span class="nx">1</span></div>
<div class="cb" style="left:592px;top:62px;width:135px;height:21px"><span class="tx" style="letter-spacing:0px;left:7px;">1 - Speaker/HP 1</span><span class="ar"></span></div>
<div class="cb" style="left:748px;top:62px;width:135px;height:21px"><span class="tx" style="letter-spacing:0px;left:7px;">2 - Speaker/HP 2</span><span class="ar"></span></div>
<div class="abs" style="left:897px;top:66px;width:12px;height:12px;border-radius:50%;border:1px solid;border-color:#8a8a8a #e8e8e8 #e8e8e8 #8a8a8a;background:#fff;box-shadow:inset 1px 1px 0 #555"></div>
<div class="abs" style="left:901px;top:70px;width:4px;height:4px;border-radius:50%;background:#000"></div>
<div class="btn" style="left:574px;top:94px;width:14px;height:17px;line-height:14px;letter-spacing:0"><span class="nx">2</span></div>
<div class="cb" style="left:592px;top:93px;width:135px;height:21px"><span class="tx" style="letter-spacing:0px;left:7px;">5 - Sound Device</span><span class="ar"></span></div>
<div class="cb" style="left:748px;top:93px;width:135px;height:21px"><span class="tx" style="letter-spacing:0px;left:7px;">6 - Sound Device</span><span class="ar"></span></div>
<div class="abs" style="left:897px;top:97px;width:12px;height:12px;border-radius:50%;border:1px solid;border-color:#8a8a8a #e8e8e8 #e8e8e8 #8a8a8a;background:#fff;box-shadow:inset 1px 1px 0 #555"></div>
<div class="btn" style="left:574px;top:125px;width:14px;height:17px;line-height:14px;letter-spacing:0"><span class="nx">3</span></div>
<div class="cb" style="left:592px;top:124px;width:135px;height:21px"><span class="tx" style="letter-spacing:0px;left:7px;"></span><span class="ar"></span></div>
<div class="cb" style="left:748px;top:124px;width:135px;height:21px"><span class="tx" style="letter-spacing:0px;left:7px;"></span><span class="ar"></span></div>
<div class="abs" style="left:897px;top:128px;width:12px;height:12px;border-radius:50%;border:1px solid;border-color:#8a8a8a #e8e8e8 #e8e8e8 #8a8a8a;background:#fff;box-shadow:inset 1px 1px 0 #555"></div>
<div class="btn" style="left:574px;top:156px;width:14px;height:17px;line-height:14px;letter-spacing:0"><span class="nx">4</span></div>
<div class="cb" style="left:592px;top:155px;width:135px;height:21px"><span class="tx" style="letter-spacing:0px;left:7px;"></span><span class="ar"></span></div>
<div class="cb" style="left:748px;top:155px;width:135px;height:21px"><span class="tx" style="letter-spacing:0px;left:7px;"></span><span class="ar"></span></div>
<div class="abs" style="left:897px;top:159px;width:12px;height:12px;border-radius:50%;border:1px solid;border-color:#8a8a8a #e8e8e8 #e8e8e8 #8a8a8a;background:#fff;box-shadow:inset 1px 1px 0 #555"></div>
<div class="btn" style="left:574px;top:187px;width:14px;height:17px;line-height:14px;letter-spacing:0"><span class="nx">5</span></div>
<div class="cb" style="left:592px;top:186px;width:135px;height:21px"><span class="tx" style="letter-spacing:0px;left:7px;"></span><span class="ar"></span></div>
<div class="cb" style="left:748px;top:186px;width:135px;height:21px"><span class="tx" style="letter-spacing:0px;left:7px;"></span><span class="ar"></span></div>
<div class="abs" style="left:897px;top:190px;width:12px;height:12px;border-radius:50%;border:1px solid;border-color:#8a8a8a #e8e8e8 #e8e8e8 #8a8a8a;background:#fff;box-shadow:inset 1px 1px 0 #555"></div>
<div class="btn" style="left:574px;top:218px;width:14px;height:17px;line-height:14px;letter-spacing:0"><span class="nx">6</span></div>
<div class="cb" style="left:592px;top:217px;width:135px;height:21px"><span class="tx" style="letter-spacing:0px;left:7px;"></span><span class="ar"></span></div>
<div class="cb" style="left:748px;top:217px;width:135px;height:21px"><span class="tx" style="letter-spacing:0px;left:7px;"></span><span class="ar"></span></div>
<div class="abs" style="left:897px;top:221px;width:12px;height:12px;border-radius:50%;border:1px solid;border-color:#8a8a8a #e8e8e8 #e8e8e8 #8a8a8a;background:#fff;box-shadow:inset 1px 1px 0 #555"></div>
<div class="btn" style="left:574px;top:249px;width:14px;height:17px;line-height:14px;letter-spacing:0"><span class="nx">7</span></div>
<div class="cb" style="left:592px;top:248px;width:135px;height:21px"><span class="tx" style="letter-spacing:0px;left:7px;"></span><span class="ar"></span></div>
<div class="cb" style="left:748px;top:248px;width:135px;height:21px"><span class="tx" style="letter-spacing:0px;left:7px;"></span><span class="ar"></span></div>
<div class="abs" style="left:897px;top:252px;width:12px;height:12px;border-radius:50%;border:1px solid;border-color:#8a8a8a #e8e8e8 #e8e8e8 #8a8a8a;background:#fff;box-shadow:inset 1px 1px 0 #555"></div>
<div class="btn" style="left:574px;top:280px;width:14px;height:17px;line-height:14px;letter-spacing:0"><span class="nx">8</span></div>
<div class="cb" style="left:592px;top:279px;width:135px;height:21px"><span class="tx" style="letter-spacing:0px;left:7px;"></span><span class="ar"></span></div>
<div class="cb" style="left:748px;top:279px;width:135px;height:21px"><span class="tx" style="letter-spacing:0px;left:7px;"></span><span class="ar"></span></div>
<div class="abs" style="left:897px;top:283px;width:12px;height:12px;border-radius:50%;border:1px solid;border-color:#8a8a8a #e8e8e8 #e8e8e8 #8a8a8a;background:#fff;box-shadow:inset 1px 1px 0 #555"></div>
<div class="t" style="left:870px;top:94px;font-size:10px;color:#444">:</div>
<div class="btn" style="left:564px;top:327px;width:102px;height:22px;line-height:19px;"><span class="nx">Options de contrôle</span></div>
<div class="btn" style="left:708px;top:327px;width:74px;height:22px;line-height:19px;letter-spacing:0"><span class="nx">OK</span></div>
<div class="btn" style="left:857px;top:327px;width:74px;height:22px;line-height:19px;"><span class="nx">Annuler</span></div>
<!-- ===== side dock ===== -->
<div class="abs" style="left:1540px;top:181px;width:70px;height:533px;border-radius:8px 0 0 8px;background:linear-gradient(90deg,rgba(255,255,255,.07) 0,rgba(255,255,255,.1) 55%,rgba(255,255,255,.38) 100%);border:1px solid rgba(225,228,232,.5)"></div>
<div class="abs" style="left:1578px;top:212px;width:16px;height:26px;background:linear-gradient(135deg,#1c3c8a,#3a78d8 50%,#0c1c4a);transform:skewY(-12deg)"></div>
<div class="abs" style="left:1578px;top:262px;width:14px;height:22px;background:linear-gradient(135deg,#2a6aa8,#7ab8e0 50%,#3a7ab0);transform:skewY(-12deg)"></div>
<svg class="abs" style="left:1547px;top:318px" width="50" height="26" viewBox="0 0 50 26"><path d="M4 0h14l4 20-16 4z" fill="#5aa838"/><path d="M18 0h14l2 19-14 3z" fill="#7ac848"/><rect x="9" y="8" width="3" height="6" fill="#123"/><rect x="22" y="7" width="3" height="6" fill="#123"/></svg>
<svg class="abs" style="left:1546px;top:348px" width="50" height="46" viewBox="0 0 50 46"><path d="M6 8l14-6 3 4 12 1v30l-26 6z" fill="#2a6aa8"/><path d="M9 14l26-5v30l-24 5z" fill="#4a9ad8"/><path d="M9 14l26-5v6l-25 5z" fill="#8ac8f0" opacity=".7"/><circle cx="30" cy="25" r="12" fill="#0c2a6a" stroke="#8ab8f0" stroke-width="1.500"/><circle cx="30" cy="25" r="9.500" fill="#1c4aa8"/><path d="M27 19l9 6-9 6z" fill="#fff"/></svg>
<svg class="abs" style="left:1546px;top:394px" width="50" height="46" viewBox="0 0 50 46"><path d="M6 8l14-6 3 4 12 1v30l-26 6z" fill="#2a6aa8"/><path d="M9 14l26-5v30l-24 5z" fill="#4a9ad8"/><path d="M9 14l26-5v6l-25 5z" fill="#8ac8f0" opacity=".7"/><rect x="20" y="14" width="22" height="18" fill="#2a3a1a" stroke="#5aa0d8" stroke-width="2"/><rect x="22" y="16" width="18" height="14" fill="#6ab828"/><path d="M24 30l3-10 2 8 3-11 2 12 3-8 2 9z" fill="#b8e848"/><rect x="8" y="16" width="8" height="10" fill="#e8e0d0"/><rect x="26" y="33" width="10" height="3" fill="#5aa0d8"/></svg>
<svg class="abs" style="left:1546px;top:440px" width="52" height="48" viewBox="0 0 52 48"><path d="M4 8l30-5 8 24-34 8z" fill="#8a9aa0"/><path d="M6 10l27-4.500 7 20-30 7z" fill="#5a6a70"/><g stroke="#a8b8c0" stroke-width=".7"><path d="M10 12l26-4M11 17l27-5M13 22l27-5M14 27l28-6M14 8l6 24M22 7l7 23M30 6l8 20"/></g><path d="M6 35l36-8 6 8-38 10z" fill="#2a78c8"/><path d="M6 35l36-8 2 3-37 9z" fill="#6ab0e8"/><circle cx="36" cy="31" r="5" fill="#d8e8f0" stroke="#246" stroke-width=".8"/></svg>
<div class="abs" style="left:1549px;top:497px;width:50px;height:1px;background:rgba(200,205,210,.55)"></div>
<svg class="abs" style="left:1546px;top:505px" width="50" height="46" viewBox="0 0 50 46"><path d="M6 8l14-6 3 4 12 1v30l-26 6z" fill="#2a6aa8"/><path d="M9 14l26-5v30l-24 5z" fill="#4a9ad8"/><path d="M9 14l26-5v6l-25 5z" fill="#8ac8f0" opacity=".7"/><circle cx="32" cy="28" r="13" fill="#0a1a6a"/><circle cx="32" cy="28" r="12" fill="#1438b8"/><path d="M24 22c4-3 8-2 10 0s0 4-3 5-4 4-6 2-3-5-1-7zM34 30c3-1 6 1 6 3s-3 5-5 4-3-6-1-7z" fill="#3a8a3a"/><ellipse cx="28" cy="22" rx="7" ry="4" fill="#fff" opacity=".25"/><rect x="9" y="20" width="6" height="6" fill="#e84a1a"/><rect x="9" y="27" width="6" height="5" fill="#3a8ae0"/></svg>
<svg class="abs" style="left:1546px;top:558px" width="50" height="48" viewBox="0 0 50 48"><path d="M14 3l8 3h6l8-3 12 8-5 8-5-3v28H12V16l-5 3-5-8z" fill="#0c0c0c" stroke="#333" stroke-width=".8"/><path d="M2 11l5 8M48 11l-5 8" stroke="#ddd" stroke-width="1.500"/><path d="M19 5q6 4 12 0" fill="none" stroke="#ddd" stroke-width="1.300"/><path d="M25 15l2 5h5l-4 3 1.500 5-4.500-3-4.500 3 1.500-5-4-3h5z" fill="#f4f4f4"/></svg>
<svg class="abs" style="left:1544px;top:600px" width="54" height="48" viewBox="0 0 54 48"><path d="M2 24c8-4 14-1 20-3s8-10 16-9 8 6 14 6c-6 2-8 6-6 12s0 8 4 14c-8-4-12-10-20-8S12 42 2 40c6-4 6-12 0-16z" fill="#f0c020" stroke="#a87808" stroke-width=".8"/><path d="M14 44l22-30 4 3-22 30z" fill="#555" stroke="#222" stroke-width=".6"/><path d="M26 6c6-4 16-2 22 6l-6 4c-4-6-10-6-14-4z" fill="#d8d8d8" stroke="#555" stroke-width=".7"/></svg>
<svg class="abs" style="left:1548px;top:650px" width="46" height="54" viewBox="0 0 46 54"><defs><linearGradient id="rb" x1="0" x2="1"><stop offset="0" stop-color="#1a5aa8"/><stop offset=".5" stop-color="#6ab8f0"/><stop offset="1" stop-color="#1a5aa8"/></linearGradient></defs><path d="M3 8h40l-5 42H8z" fill="url(#rb)" opacity=".9"/><ellipse cx="23" cy="8" rx="20" ry="4" fill="#9ad0f8" stroke="#2a6ab8" stroke-width="1"/><path d="M10 14l14 6 12-8-6 14-14 2z" fill="#c8e8ff" opacity=".5"/><circle cx="20" cy="30" r="11" fill="#30e040" opacity=".35"/><path d="M12 30a8 8 0 0 1 13-6l2-2 1 7-7-1 2-2a5 5 0 0 0-8 4zM28 30a8 8 0 0 1-13 6l-2 2-1-7 7 1-2 2a5 5 0 0 0 8-4z" fill="#38e838"/><path d="M24 26l4 2" stroke="#f08020" stroke-width="2"/></svg>
<!-- ===== ASIO4ALL ===== -->
<style>.a4{color:#f2f2f2;letter-spacing:-0.15px}.a4h{position:absolute;background:#2b2d3b;color:#f2f2f2;text-align:center;line-height:15px;height:16px}.ip{position:absolute;width:31px;height:15px;border-radius:2px;background:linear-gradient(#5a5d72 0,#4a4d60 45%,#3a3c4d 50%,#34364a 100%);box-shadow:1px 1px 0 #1c1d28,inset 1px 1px 0 #7c8094}.ip i{position:absolute;left:0;top:0;width:16px;height:14px;border:1px solid #7adff0;border-radius:2px;background:#1a86d8}.ip i:before{content:"";position:absolute;left:2px;top:3px;width:10px;height:7px;border:2px solid #fff;border-top:0;border-radius:0 0 2px 2px}.ip i:after{content:"";position:absolute;left:6px;top:1px;width:2px;height:6px;background:#fff}.ip u{position:absolute;left:20px;top:2px;width:0;height:0;border:5px solid transparent;border-left:8px solid #86e4ec;border-right:0}.ip u:after{content:"";position:absolute;left:-6px;top:-2px;border:2px solid transparent;border-left:4px solid #3d4052;border-right:0}.ex{position:absolute;width:9px;height:9px;border:1px solid #e8e8e8}.ex:after{content:"";position:absolute;left:1px;top:3px;width:5px;height:1px;background:#e8e8e8}.ck{position:absolute;width:11px;height:11px;background:#fff;border:1px solid #8a8a8a;box-shadow:inset 1px 1px 0 #444}.trk{position:absolute;height:3px;background:#e6e6e6;border-top:1px solid #8a8a8a;border-bottom:1px solid #fff}.thb{position:absolute;width:7px;height:15px;background:linear-gradient(90deg,#fff,#d0d0d0);border:1px solid #777;border-radius:1px}</style>
<div class="abs" style="left:1007px;top:59px;width:570px;height:259px;border-radius:7px;border:1px solid #1e1414;background:#4a4040;box-shadow:inset 0 0 0 1px rgba(255,255,255,.4),0 3px 12px 2px rgba(0,0,0,.6)"></div>
<div class="abs" style="left:1008px;top:60px;width:568px;height:28px;border-radius:6px 6px 0 0;background:linear-gradient(#e6dcda 0,#d8cccb 30%,#b9aaa8 45%,#5a4846 58%,#221615 72%,#150c0c 100%)"></div>
<div class="abs" style="left:1008px;top:60px;width:290px;height:28px;border-radius:6px 0 0 0;background:linear-gradient(90deg,rgba(238,230,228,1) 0,rgba(236,228,226,.96) 70%,rgba(236,228,226,.6) 82%,rgba(236,228,226,0) 100%)"></div>
<div class="abs" style="left:1008px;top:88px;width:5px;height:227px;background:linear-gradient(90deg,#2a2020,#6a5e5c 45%,#3a3030)"></div>
<div class="abs" style="left:1571px;top:88px;width:5px;height:227px;background:linear-gradient(90deg,#3a3030,#6a5e5c 55%,#2a2020)"></div>
<div class="abs" style="left:1008px;top:313px;width:568px;height:4px;border-radius:0 0 6px 6px;background:linear-gradient(#3a3030,#4a4040 50%,#1a1212)"></div>
<svg class="abs" style="left:1014px;top:66px" width="17" height="16" viewBox="0 0 17 16"><rect width="17" height="5" fill="#ddd"/><text x="0" y="4.5" font-family="Liberation Sans" font-size="5" font-weight="bold" fill="#a01818">ASIO!</text><rect y="6" width="8" height="6" fill="#1e8a4a"/><rect x="4" y="9" width="4" height="7" fill="#b82020"/><rect x="9" y="6" width="8" height="10" fill="#b82020"/><rect x="11" y="10" width="3" height="6" fill="#ddd"/><g stroke="#e8e0e0" stroke-width=".5" opacity=".6"><path d="M0 8h17M0 10h17M0 12h17M0 14h17M2 6v10M4 6v10M6 6v10M8 6v10M10 6v10M12 6v10M14 6v10M16 6v10"/></g></svg>
<div class="t" style="left:1042px;top:67px;font-size:12px;letter-spacing:-0.2px;transform:none;text-shadow:0 0 7px #fff,0 0 7px #fff,0 0 4px #fff">ASIO4ALL v2.9 - www.asio4all.com</div>
<div class="abs" style="left:1523px;top:59px;width:47px;height:20px;border:1px solid #d8cccc;border-top:0;border-radius:0 0 5px 5px;background:linear-gradient(#e0d6d4 0,#cfc3c1 45%,#b8aaa8 50%,#a89a98 100%);box-shadow:0 0 0 1px #4a3c3c"></div>
<svg class="abs" style="left:1540px;top:63px" width="14" height="12" viewBox="0 0 14 12"><path d="M1.5 1.5h3l2.5 3 2.5-3h3L8.7 6l3.8 4.5h-3L7 7.5l-2.5 3h-3L5.3 6z" fill="#fff" stroke="#333" stroke-width=".8"/></svg>
<div class="abs" style="left:1012px;top:88px;width:559px;height:226px;background:#3b3d4f;border:1px solid #c8c8d0;box-shadow:inset 0 0 0 1px #1c1d28"></div>
<div class="a4h" style="left:1017px;top:92px;width:294px;height:16px;"><span class="nx a4">Liste des périphériques WDM</span></div>
<div class="a4h" style="left:1317px;top:92px;width:249px;height:16px;"><span class="nx a4">Compensation de la latence</span></div>
<svg class="abs" style="left:1071px;top:112px" width="32" height="17" viewBox="0 0 32 17"><rect x="1" y="1.500" width="30.500" height="15" rx="2" fill="#14151c"/><rect x="0" y="0" width="30.500" height="15" rx="2" fill="#5b5f76"/><rect x="0" y="7.500" width="30.500" height="7.500" rx="2" fill="#44475b"/><rect x="0" y="7" width="30.500" height="4" fill="#44475b"/><rect x=".5" y=".5" width="14" height="14" rx="2" fill="#2478cc" stroke="#66dcf2"/><rect x="1.500" y="8" width="12" height="5.500" fill="#1c5cac"/><rect x="4.500" y="6.500" width="6" height="4.500" fill="#3ad0ea"/><path d="M3.500 5v6.800h8V5M3 5.300h2.200M10 5.300h2.200" stroke="#fff" stroke-width="2" fill="none"/><rect x="6.700" y="2" width="1.600" height="5.500" fill="#8aeefa"/><path d="M19.700 2.500l6.300 5-6.300 5z" stroke="#88e8f0" stroke-width="1.700" fill="none" stroke-linejoin="miter"/></svg>
<div class="t" style="left:1107px;top:113px;color:#f2f2f2;letter-spacing:-0.15px">Sortie: 2x 44.1-192kHz, 32Bits</div>
<div class="ex" style="left:1018px;top:132px"></div>
<svg class="abs" style="left:1034px;top:128px" width="32" height="17" viewBox="0 0 32 17"><rect x="1" y="1.500" width="30.500" height="15" rx="2" fill="#14151c"/><rect x="0" y="0" width="30.500" height="15" rx="2" fill="#5b5f76"/><rect x="0" y="7.500" width="30.500" height="7.500" rx="2" fill="#44475b"/><rect x="0" y="7" width="30.500" height="4" fill="#44475b"/><rect x=".5" y=".5" width="14" height="14" rx="2" fill="#2478cc" stroke="#66dcf2"/><rect x="1.500" y="8" width="12" height="5.500" fill="#1c5cac"/><rect x="4.500" y="6.500" width="6" height="4.500" fill="#3ad0ea"/><path d="M3.500 5v6.800h8V5M3 5.300h2.200M10 5.300h2.200" stroke="#fff" stroke-width="2" fill="none"/><rect x="6.700" y="2" width="1.600" height="5.500" fill="#8aeefa"/><path d="M19.700 2.500l6.300 5-6.300 5z" stroke="#88e8f0" stroke-width="1.700" fill="none" stroke-linejoin="miter"/></svg>
<div class="t" style="left:1070px;top:129px;color:#f2f2f2;letter-spacing:-0.15px">USB Audio CODEC</div>
<svg class="abs" style="left:1053px;top:144px" width="32" height="17" viewBox="0 0 32 17"><rect x="1" y="1.500" width="30.500" height="15" rx="2" fill="#14151c"/><rect x="0" y="0" width="30.500" height="15" rx="2" fill="#5b5f76"/><rect x="0" y="7.500" width="30.500" height="7.500" rx="2" fill="#44475b"/><rect x="0" y="7" width="30.500" height="4" fill="#44475b"/><rect x=".5" y=".5" width="14" height="14" rx="2" fill="#2478cc" stroke="#66dcf2"/><rect x="1.500" y="8" width="12" height="5.500" fill="#1c5cac"/><rect x="4.500" y="6.500" width="6" height="4.500" fill="#3ad0ea"/><path d="M3.500 5v6.800h8V5M3 5.300h2.200M10 5.300h2.200" stroke="#fff" stroke-width="2" fill="none"/><rect x="6.700" y="2" width="1.600" height="5.500" fill="#8aeefa"/><path d="M18 2l10 11M28 2l-10 11" stroke="#f26a6a" stroke-width="1.500"/><path d="M18 2l10 11M28 2l-10 11" stroke="#fff" stroke-width=".5" opacity=".6"/></svg>
<div class="t" style="left:1089px;top:145px;color:#f2f2f2;letter-spacing:-0.15px">Sortie: 2x 32-48kHz, 16Bits</div>
<svg class="abs" style="left:1053px;top:160px" width="32" height="17" viewBox="0 0 32 17"><rect x="1" y="1.500" width="30.500" height="15" rx="2" fill="#14151c"/><rect x="0" y="0" width="30.500" height="15" rx="2" fill="#5b5f76"/><rect x="0" y="7.500" width="30.500" height="7.500" rx="2" fill="#44475b"/><rect x="0" y="7" width="30.500" height="4" fill="#44475b"/><rect x=".5" y=".5" width="14" height="14" rx="2" fill="#2478cc" stroke="#66dcf2"/><rect x="1.500" y="8" width="12" height="5.500" fill="#1c5cac"/><rect x="4.500" y="6.500" width="6" height="4.500" fill="#3ad0ea"/><path d="M3.500 5v6.800h8V5M3 5.300h2.200M10 5.300h2.200" stroke="#fff" stroke-width="2" fill="none"/><rect x="6.700" y="2" width="1.600" height="5.500" fill="#8aeefa"/><path d="M19.700 2.500l6.300 5-6.300 5z" stroke="#88e8f0" stroke-width="1.700" fill="none" stroke-linejoin="miter"/></svg>
<div class="t" style="left:1089px;top:161px;color:#f2f2f2;letter-spacing:-0.15px">Entrée: 2x 11.0-48kHz, 16Bits</div>
<div class="ex" style="left:1018px;top:180px"></div>
<svg class="abs" style="left:1034px;top:176px" width="32" height="17" viewBox="0 0 32 17"><rect x="1" y="1.500" width="30.500" height="15" rx="2" fill="#14151c"/><rect x="0" y="0" width="30.500" height="15" rx="2" fill="#5b5f76"/><rect x="0" y="7.500" width="30.500" height="7.500" rx="2" fill="#44475b"/><rect x="0" y="7" width="30.500" height="4" fill="#44475b"/><rect x=".5" y=".5" width="14" height="14" rx="2" fill="#2478cc" stroke="#66dcf2"/><rect x="1.500" y="8" width="12" height="5.500" fill="#1c5cac"/><rect x="4.500" y="6.500" width="6" height="4.500" fill="#3ad0ea"/><path d="M3.500 5v6.800h8V5M3 5.300h2.200M10 5.300h2.200" stroke="#fff" stroke-width="2" fill="none"/><rect x="6.700" y="2" width="1.600" height="5.500" fill="#8aeefa"/><path d="M19.700 2.500l6.300 5-6.300 5z" stroke="#88e8f0" stroke-width="1.700" fill="none" stroke-linejoin="miter"/></svg>
<div class="t" style="left:1070px;top:177px;color:#f2f2f2;letter-spacing:-0.15px">USB Audio CODEC</div>
<svg class="abs" style="left:1053px;top:192px" width="32" height="17" viewBox="0 0 32 17"><rect x="1" y="1.500" width="30.500" height="15" rx="2" fill="#14151c"/><rect x="0" y="0" width="30.500" height="15" rx="2" fill="#5b5f76"/><rect x="0" y="7.500" width="30.500" height="7.500" rx="2" fill="#44475b"/><rect x="0" y="7" width="30.500" height="4" fill="#44475b"/><rect x=".5" y=".5" width="14" height="14" rx="2" fill="#2478cc" stroke="#66dcf2"/><rect x="1.500" y="8" width="12" height="5.500" fill="#1c5cac"/><rect x="4.500" y="6.500" width="6" height="4.500" fill="#3ad0ea"/><path d="M3.500 5v6.800h8V5M3 5.300h2.200M10 5.300h2.200" stroke="#fff" stroke-width="2" fill="none"/><rect x="6.700" y="2" width="1.600" height="5.500" fill="#8aeefa"/><path d="M19.700 2.500l6.300 5-6.300 5z" stroke="#88e8f0" stroke-width="1.700" fill="none" stroke-linejoin="miter"/></svg>
<div class="t" style="left:1089px;top:193px;color:#f2f2f2;letter-spacing:-0.15px">Sortie: 2x 32-48kHz, 16Bits</div>
<svg class="abs" style="left:1053px;top:208px" width="32" height="17" viewBox="0 0 32 17"><rect x="1" y="1.500" width="30.500" height="15" rx="2" fill="#14151c"/><rect x="0" y="0" width="30.500" height="15" rx="2" fill="#5b5f76"/><rect x="0" y="7.500" width="30.500" height="7.500" rx="2" fill="#44475b"/><rect x="0" y="7" width="30.500" height="4" fill="#44475b"/><rect x=".5" y=".5" width="14" height="14" rx="2" fill="#2478cc" stroke="#66dcf2"/><rect x="1.500" y="8" width="12" height="5.500" fill="#1c5cac"/><rect x="4.500" y="6.500" width="6" height="4.500" fill="#3ad0ea"/><path d="M3.500 5v6.800h8V5M3 5.300h2.200M10 5.300h2.200" stroke="#fff" stroke-width="2" fill="none"/><rect x="6.700" y="2" width="1.600" height="5.500" fill="#8aeefa"/><path d="M19.700 2.500l6.300 5-6.300 5z" stroke="#88e8f0" stroke-width="1.700" fill="none" stroke-linejoin="miter"/></svg>
<div class="t" style="left:1089px;top:209px;color:#f2f2f2;letter-spacing:-0.15px">Entrée: 2x 11.0-48kHz, 16Bits</div>
<div class="ex" style="left:1018px;top:228px"></div>
<svg class="abs" style="left:1034px;top:224px" width="32" height="17" viewBox="0 0 32 17"><rect x="1" y="1.500" width="30.500" height="15" rx="2" fill="#14151c"/><rect x="0" y="0" width="30.500" height="15" rx="2" fill="#5b5f76"/><rect x="0" y="7.500" width="30.500" height="7.500" rx="2" fill="#44475b"/><rect x="0" y="7" width="30.500" height="4" fill="#44475b"/><rect x=".5" y=".5" width="14" height="14" rx="2" fill="#2478cc" stroke="#66dcf2"/><rect x="1.500" y="8" width="12" height="5.500" fill="#1c5cac"/><rect x="4.500" y="6.500" width="6" height="4.500" fill="#3ad0ea"/><path d="M3.500 5v6.800h8V5M3 5.300h2.200M10 5.300h2.200" stroke="#fff" stroke-width="2" fill="none"/><rect x="6.700" y="2" width="1.600" height="5.500" fill="#8aeefa"/><path d="M19.700 2.500l6.300 5-6.300 5z" stroke="#88e8f0" stroke-width="1.700" fill="none" stroke-linejoin="miter"/></svg>
<div class="t" style="left:1070px;top:225px;color:#f2f2f2;letter-spacing:-0.15px">USB Sound Device</div>
<svg class="abs" style="left:1053px;top:240px" width="32" height="17" viewBox="0 0 32 17"><rect x="1" y="1.500" width="30.500" height="15" rx="2" fill="#14151c"/><rect x="0" y="0" width="30.500" height="15" rx="2" fill="#5b5f76"/><rect x="0" y="7.500" width="30.500" height="7.500" rx="2" fill="#44475b"/><rect x="0" y="7" width="30.500" height="4" fill="#44475b"/><rect x=".5" y=".5" width="14" height="14" rx="2" fill="#2478cc" stroke="#66dcf2"/><rect x="1.500" y="8" width="12" height="5.500" fill="#1c5cac"/><rect x="4.500" y="6.500" width="6" height="4.500" fill="#3ad0ea"/><path d="M3.500 5v6.800h8V5M3 5.300h2.200M10 5.300h2.200" stroke="#fff" stroke-width="2" fill="none"/><rect x="6.700" y="2" width="1.600" height="5.500" fill="#8aeefa"/><path d="M19.700 2.500l6.300 5-6.300 5z" stroke="#88e8f0" stroke-width="1.700" fill="none" stroke-linejoin="miter"/></svg>
<div class="t" style="left:1089px;top:241px;color:#f2f2f2;letter-spacing:-0.15px">Sortie: 2x 44.1-48kHz, 16Bits</div>
<div class="abs" style="left:1297px;top:112px;width:17px;height:148px;background:#f7f7f7"></div>
<div class="abs" style="left:1298px;top:184px;width:15px;height:57px;border:1px solid #9a9a9a;border-radius:2px;background:linear-gradient(90deg,#f6f6f6,#d8d8d8)"></div>
<div class="abs" style="left:1301px;top:210px;width:8px;height:1px;background:#666;box-shadow:0 2px #666,0 4px #666,0 6px #666"></div>
<div class="abs" style="left:1301px;top:118px;width:0px;height:0px;border:4px solid transparent;border-bottom:5px solid #333;border-top:0"></div>
<div class="abs" style="left:1301px;top:250px;width:0px;height:0px;border:4px solid transparent;border-top:5px solid #333;border-bottom:0"></div>
<div class="a4h" style="left:1017px;top:264px;width:294px;height:15px;"><span class="nx a4">Taille de buffer ASIO = 512 échantillons</span></div>
<div class="a4h" style="left:1317px;top:264px;width:249px;height:15px;"></div>
<div class="abs" style="left:1022px;top:287px;width:285px;height:18px;background:#fff;border:1px solid #8a8a8a;box-shadow:inset 1px 1px 0 #555"></div>
<div class="abs" style="left:1186px;top:284px;width:11px;height:24px;background:linear-gradient(90deg,#f4f4f4,#c8d0d8);border:1px solid #7a8088;border-radius:2px"></div>
<div class="t" style="left:1320px;top:112px;color:#f2f2f2;letter-spacing:-0.15px">Entrée: 0 échantillons</div>
<div class="t" style="left:1320px;top:133px;color:#f2f2f2;letter-spacing:-0.15px">Sortie: 0 échantillons</div>
<div class="trk" style="left:1458px;top:116px;width:105px"></div><div class="thb" style="left:1455px;top:111px"></div>
<div class="trk" style="left:1458px;top:137px;width:105px"></div><div class="thb" style="left:1455px;top:132px"></div>
<div class="a4h" style="left:1317px;top:156px;width:249px;height:16px;"><span class="nx a4">Options</span></div>
<div class="ck" style="left:1321px;top:179px"></div>
<div class="t" style="left:1338px;top:177px;color:#f2f2f2;letter-spacing:-0.15px">Activer le mode 'Pull' (WaveRT)</div>
<div class="t" style="left:1320px;top:198px;color:#f2f2f2;letter-spacing:-0.15px">Décalage Buffer: 4 ms</div>
<div class="trk" style="left:1455px;top:202px;width:108px"></div><div class="thb" style="left:1474px;top:197px"></div>
<div class="ck" style="left:1321px;top:221px"></div>
<svg class="abs" style="left:1322px;top:222px" width="10" height="10"><path d="M1.5 4.5l2.5 3 4.5-6" stroke="#000" stroke-width="1.8" fill="none"/></svg>
<div class="t" style="left:1338px;top:219px;color:#f2f2f2;letter-spacing:-0.15px">Toujours rééchantillonner 44.1kHz &lt;-&gt; 48kHz</div>
<div class="ck" style="left:1321px;top:243px"></div>
<div class="t" style="left:1338px;top:240px;color:#f2f2f2;letter-spacing:-0.15px">Forcer le pilote WDM en 16 bits</div>
<div class="abs" style="left:1460px;top:282px;width:37px;height:28px;background:linear-gradient(#5a5d70,#3a3c4e);border:1px solid;border-color:#7a7d90 #14151c #14151c #7a7d90"></div>
<svg class="abs" style="left:1466px;top:284px" width="26" height="24" viewBox="0 0 26 24"><path d="M1 9a12 8 0 0 1 24 0z" fill="#e8e8e8" stroke="#999" stroke-width=".6"/><path d="M1 9l12 13L25 9M7 9l6 13 6-13M13 9v13" stroke="#ddd" stroke-width="1" fill="none"/><path d="M7 9a6 8 0 0 1 12 0M13 1v8" stroke="#999" stroke-width=".7" fill="none"/></svg>
<div class="abs" style="left:1512px;top:282px;width:52px;height:28px;background:linear-gradient(#5a5d70,#3a3c4e);border:1px solid;border-color:#7a7d90 #14151c #14151c #7a7d90"></div>
<svg class="abs" style="left:1513px;top:283px" width="50" height="26" viewBox="0 0 50 26"><g fill="#fff" stroke="#222" stroke-width=".7"><path d="M4 2a7 7 0 0 1 9 6l24 9a6 6 0 0 1 9 5l-5-2-3 3 3 3a7 7 0 0 1-8-6L9 12a6 6 0 0 1-8-5l5 2 3-3z"/><path d="M46 3a7 7 0 0 0-9 6L13 16a6 6 0 0 0-9 5l5-2 3 3-3 3a7 7 0 0 0 8-6l24-8a6 6 0 0 0 8-5l-5 2-3-3z"/></g><path d="M12 20L40 4M14 6l22 14" stroke="#e0208a" stroke-width="2.4"/></svg>
<!-- ===== Son (Windows sound dialog) ===== -->
<style>.s7{position:absolute;border:1px solid #adb2b5;border-radius:3px;background:#f4f4f4;box-shadow:inset 0 0 0 1px #fcfcfc;color:#838383;text-align:center;line-height:19px;font-size:12px;white-space:nowrap}.stab{position:absolute;border:1px solid #898c95;border-bottom:0;background:linear-gradient(#f4f4f4 0,#ebebeb 50%,#dddddd 52%,#d2d2d2 100%)}.g{color:#8c8c8c}</style>
<div class="abs" style="left:753px;top:336px;width:496px;height:481px;border-radius:8px;border:1px solid #1e1414;background:#4a2e2e;box-shadow:inset 0 0 0 1px rgba(255,255,255,.55),0 4px 14px 3px rgba(0,0,0,.65)"></div>
<div class="abs" style="left:754px;top:337px;width:494px;height:29px;border-radius:7px 7px 0 0;background:linear-gradient(#2c1c1c 0,#3a2a2a 25%,#5e4c4c 50%,#8a7878 72%,#7c6a6a 100%)"></div>
<div class="abs" style="left:754px;top:337px;width:250px;height:29px;border-radius:7px 0 0 0;background:linear-gradient(90deg,#b0a0a0 0,#ab9797 25%,#9a8484 50%,#a08a8a 68%,rgba(140,120,120,.75) 80%,rgba(110,90,90,.35) 91%,rgba(100,80,80,0) 100%)"></div>
<div class="abs" style="left:754px;top:337px;width:494px;height:10px;border-radius:7px 7px 0 0;background:linear-gradient(rgba(255,255,255,.22),rgba(255,255,255,0))"></div>
<div class="abs" style="left:754px;top:366px;width:7px;height:445px;background:linear-gradient(90deg,#d8c8c8 0,#6a4848 16%,#4a2c2c 45%,#2e1a1a 82%,#d8cccc 100%)"></div>
<div class="abs" style="left:1243px;top:366px;width:5px;height:445px;background:linear-gradient(90deg,#d8cccc 0,#5a3a3a 22%,#4a2c2c 60%,#2a1616 100%)"></div>
<div class="abs" style="left:754px;top:810px;width:494px;height:6px;border-radius:0 0 7px 7px;background:linear-gradient(#d8cccc 0,#5a3a3a 25%,#6a4a4a 50%,#3a2222 75%,#1a0e0e 100%)"></div>
<svg class="abs" style="left:760px;top:343px" width="17" height="17" viewBox="0 0 17 17"><path d="M10 3l4-1.500q2 6 0 13.500l-4-1.500z" fill="#b4b8be" opacity=".8"/><ellipse cx="7" cy="8.500" rx="5.800" ry="6.800" fill="#d6dade" stroke="#e8ecf0" stroke-width="1" stroke-dasharray="1.500 1"/><ellipse cx="6.500" cy="8.500" rx="3.200" ry="4" fill="#c6ccd2"/><ellipse cx="6.200" cy="8.500" rx="1.300" ry="1.700" fill="#dde2e6"/></svg>
<div class="t" style="left:782px;top:344px;transform:none;font-size:12px;letter-spacing:-0.52px;text-shadow:0 0 7px #fff,0 0 7px #fff,0 0 5px #fff">Son</div>
<div class="abs" style="left:1196px;top:336px;width:47px;height:20px;border:1px solid #e8d8d8;border-top:0;border-radius:0 0 5px 5px;background:linear-gradient(#e8a090 0,#d46a58 45%,#c03c28 50%,#d25a3c 100%);box-shadow:0 0 0 1px #4a1c14"></div>
<svg class="abs" style="left:1213px;top:340px" width="14" height="12" viewBox="0 0 14 12"><path d="M1.500 1.500h3l2.500 3 2.500-3h3L8.700 6l3.800 4.500h-3L7 7.500l-2.500 3h-3L5.300 6z" fill="#fff" stroke="#5a2a20" stroke-width=".8"/></svg>
<div class="abs face" style="left:760px;top:365px;width:484px;height:446px;border:1px solid #6a5656"></div>
<div class="stab" style="left:769px;top:376px;width:47px;height:18px"></div>
<div class="stab" style="left:903px;top:376px;width:41px;height:18px"></div>
<div class="stab" style="left:945px;top:376px;width:86px;height:18px"></div>
<div class="abs" style="left:767px;top:393px;width:467px;height:380px;background:#fff;border:1px solid #898c95"></div>
<div class="abs" style="left:815px;top:373px;width:89px;height:22px;border:1px solid #898c95;border-bottom:0;background:#fff"></div>
<div class="t" style="left:774px;top:378px;transform:none;font-size:12px;letter-spacing:-0.57px;">Lecture</div>
<div class="t" style="left:822px;top:376px;transform:none;font-size:12px;letter-spacing:-0.56px;">Enregistrement</div>
<div class="t" style="left:907px;top:378px;transform:none;font-size:12px;letter-spacing:-1.09px;">Sons</div>
<div class="t" style="left:950px;top:378px;transform:none;font-size:12px;letter-spacing:-0.88px;">Communications</div>
<div class="t" style="left:783px;top:406px;transform:none;font-size:12px;letter-spacing:-0.15px;">Sélectionnez un périphérique d'enregistrement ci-dessous pour modifier ses</div>
<div class="t" style="left:783px;top:419px;transform:none;font-size:12px;letter-spacing:-0.36px;">paramètres :</div>
<div class="abs" style="left:782px;top:442px;width:434px;height:278px;background:#fff;border:1px solid #828790"></div>
<div class="t" style="left:848px;top:452px;transform:none;font-size:12px;letter-spacing:-0.05px;">Microphone</div>
<div class="t" style="left:848px;top:465px;transform:none;font-size:12px;letter-spacing:-0.63px;color:#8c8c8c">2- USB Audio CODEC</div>
<div class="t" style="left:848px;top:478px;transform:none;font-size:12px;letter-spacing:-0.59px;color:#8c8c8c">Désactivé</div>
<div class="t" style="left:848px;top:505px;transform:none;font-size:12px;letter-spacing:-0.12px;">Microphone / Ligne entrée</div>
<div class="t" style="left:848px;top:518px;transform:none;font-size:12px;letter-spacing:-0.24px;color:#8c8c8c">IDT High Definition Audio CODEC</div>
<div class="t" style="left:848px;top:531px;transform:none;font-size:12px;letter-spacing:-0.13px;color:#8c8c8c">Périphérique par défaut</div>
<div class="t" style="left:848px;top:558px;transform:none;font-size:12px;letter-spacing:-0.37px;">Réseau de microphones</div>
<div class="t" style="left:848px;top:571px;transform:none;font-size:12px;letter-spacing:-0.24px;color:#8c8c8c">IDT High Definition Audio CODEC</div>
<div class="t" style="left:848px;top:584px;transform:none;font-size:12px;letter-spacing:-0.59px;color:#8c8c8c">Désactivé</div>
<div class="t" style="left:848px;top:611px;transform:none;font-size:12px;letter-spacing:-0.25px;">Enregistr. playback</div>
<div class="t" style="left:848px;top:624px;transform:none;font-size:12px;letter-spacing:-0.24px;color:#8c8c8c">IDT High Definition Audio CODEC</div>
<div class="t" style="left:848px;top:637px;transform:none;font-size:12px;letter-spacing:-0.01px;color:#8c8c8c">Non disponible</div>
<div class="t" style="left:848px;top:664px;transform:none;font-size:12px;letter-spacing:-0.05px;">Microphone</div>
<div class="t" style="left:848px;top:677px;transform:none;font-size:12px;letter-spacing:-0.69px;color:#8c8c8c">USB Audio CODEC</div>
<div class="t" style="left:848px;top:690px;transform:none;font-size:12px;letter-spacing:-0.59px;color:#8c8c8c">Désactivé</div>
<svg class="abs" style="left:780px;top:442px" width="60" height="54" viewBox="0 0 60 54"><defs><linearGradient id="cone" x1="0" x2="1"><stop offset="0" stop-color="#f2f2f2"/><stop offset=".45" stop-color="#dcdcdc"/><stop offset="1" stop-color="#8e8e8e"/></linearGradient></defs><path d="M17 44.500L32 37.500h18l7 7.500q-20 5-40-.5z" fill="#a8a8a8"/><path d="M17 44.500L32 37.500h18q-16 1-33 7z" fill="#cdcdcd" opacity=".8"/><path d="M21 8.500l2.500-1.500L40.500 35a4.600 4.600 0 0 1-8.500 3.500z" fill="url(#cone)"/><circle cx="36" cy="38.500" r="4.300" fill="#e4e4e4" stroke="#b0b0b0" stroke-width=".6"/><path d="M31 33l7-3" stroke="#a0a0a0" stroke-width=".8"/><path d="M18 9.500L28 5" stroke="#a4a4a4" stroke-width="1.600" stroke-linecap="round"/><path d="M10.500 14L19.500 9.800" stroke="#cfcfcf" stroke-width="6.500" stroke-linecap="round"/><path d="M10.800 15.800L20 11.500" stroke="#a4a4a4" stroke-width="2.500" stroke-linecap="round" opacity=".6"/><circle cx="49.500" cy="46.500" r="7" fill="#f0f0f0" stroke="#8e8e8e" stroke-width="1"/><circle cx="49.500" cy="46.500" r="5.300" fill="#d0d0d0"/><path d="M47.800 42.500h3.400v3.600h2.600L49.500 51l-4.300-4.900h2.600z" fill="#3c3c3c"/></svg>
<svg class="abs" style="left:780px;top:495px" width="60" height="54" viewBox="0 0 60 54"><defs><linearGradient id="cone" x1="0" x2="1"><stop offset="0" stop-color="#f2f2f2"/><stop offset=".45" stop-color="#dcdcdc"/><stop offset="1" stop-color="#8e8e8e"/></linearGradient></defs><path d="M17 44.500L32 37.500h18l7 7.500q-20 5-40-.5z" fill="#2c2c2c"/><path d="M17 44.500L32 37.500h18q-16 1-33 7z" fill="#5a5a5a" opacity=".8"/><path d="M21 8.500l2.500-1.500L40.500 35a4.600 4.600 0 0 1-8.500 3.500z" fill="url(#cone)"/><circle cx="36" cy="38.500" r="4.300" fill="#e4e4e4" stroke="#b0b0b0" stroke-width=".6"/><path d="M31 33l7-3" stroke="#a0a0a0" stroke-width=".8"/><path d="M18 9.500L28 5" stroke="#1a1a1a" stroke-width="1.600" stroke-linecap="round"/><path d="M10.500 14L19.500 9.800" stroke="#4a4a4a" stroke-width="6.500" stroke-linecap="round"/><path d="M10.800 15.800L20 11.500" stroke="#1a1a1a" stroke-width="2.500" stroke-linecap="round" opacity=".6"/><defs><radialGradient id="ck" cx=".4" cy=".3" r=".8"><stop offset="0" stop-color="#7ad86a"/><stop offset=".6" stop-color="#2aa02a"/><stop offset="1" stop-color="#167a16"/></radialGradient></defs><circle cx="47" cy="43.500" r="9" fill="url(#ck)" stroke="#dff0df" stroke-width="1"/><path d="M41.500 44l4 4.800 7.500-10.500" stroke="#fff" stroke-width="2.800" fill="none" stroke-linecap="round" stroke-linejoin="round"/></svg>
<svg class="abs" style="left:780px;top:552px" width="60" height="52" viewBox="0 0 60 52"><ellipse cx="27" cy="33.500" rx="12.500" ry="6" fill="#a2a2a2"/><ellipse cx="27" cy="32.500" rx="11.500" ry="4.800" fill="#b4b4b4"/><path d="M24 25h6l1 8h-8z" fill="#8e8e8e"/><path d="M6 16q0-2.500 3-2.500l15 0q14 1 25 9 2 2 1.500 5t-4 3.200l-38-8q-2.500-.8-2.500-3z" fill="#a6a6a6"/><path d="M6 16q0-2.500 3-2.500l15 0q14 1 25 9l-41-7z" fill="#bdbdbd"/><path d="M37 18.500l12 4.500q2 2 1.500 5t-4 3.200l-9.500-2z" fill="#8a8a8a"/><path d="M6 15.500q0-2 3-2l2 0v9.500l-3-.6q-2-.8-2-3z" fill="#8f8f8f"/><rect x="16" y="20.500" width="7" height="2.600" fill="#e0e0e0" transform="rotate(10 16 20.500)"/><circle cx="49.500" cy="42.500" r="7" fill="#f0f0f0" stroke="#8e8e8e" stroke-width="1"/><circle cx="49.500" cy="42.500" r="5.300" fill="#d0d0d0"/><path d="M47.800 38.500h3.400v3.600h2.600L49.500 47l-4.300-4.900h2.600z" fill="#3c3c3c"/></svg>
<svg class="abs" style="left:780px;top:606px" width="60" height="50" viewBox="0 54 60 50"><path d="M44.500 62.500l4-1.500 1.500 1v34l-3 3-2.500-1z" fill="#d4d4d8" stroke="#8e8e96" stroke-width=".6"/><path d="M46.500 64v32" stroke="#f4f4f4" stroke-width="1"/><path d="M9.500 62l33.500 5.500v21.500l-33.500-5z" fill="#2a5c3a"/><path d="M9.500 62l33.500 5.500v2l-33.500-5.500z" fill="#5a9a68"/><path d="M11 84.300l23 3.500v3.200l-23-3.500z" fill="#e0b030"/><path d="M12 88.500l28 4.500-2 3-26-5z" fill="#ddd" opacity=".7"/><path d="M20 74l8 1.300v8.500l-8-1.300z" fill="#1c1c1c"/><g fill="#d8e8d8"><rect x="11.500" y="66" width="2" height="4"/><rect x="11.500" y="73" width="2.500" height="2"/><rect x="11.500" y="78" width="2.500" height="2"/><rect x="16" y="67" width="1.500" height="4"/><rect x="23" y="68" width="1.500" height="3"/><rect x="30" y="70" width="2" height="3"/><rect x="35" y="71" width="1.500" height="5"/><rect x="31" y="77" width="2" height="2"/><rect x="36" y="79" width="2" height="2"/><rect x="31" y="82" width="7" height="1.500"/><rect x="38" y="72" width="2" height="2"/></g><g fill="#e8f0e8"><circle cx="18.500" cy="75" r=".6"/><circle cx="18.500" cy="78" r=".6"/><circle cx="18.500" cy="81" r=".6"/><circle cx="29.500" cy="77" r=".6"/><circle cx="29.500" cy="80" r=".6"/><circle cx="29.500" cy="83" r=".6"/></g></svg>
<svg class="abs" style="left:780px;top:654px" width="60" height="54" viewBox="0 0 60 54"><defs><linearGradient id="cone" x1="0" x2="1"><stop offset="0" stop-color="#f2f2f2"/><stop offset=".45" stop-color="#dcdcdc"/><stop offset="1" stop-color="#8e8e8e"/></linearGradient></defs><path d="M17 44.500L32 37.500h18l7 7.500q-20 5-40-.5z" fill="#a8a8a8"/><path d="M17 44.500L32 37.500h18q-16 1-33 7z" fill="#cdcdcd" opacity=".8"/><path d="M21 8.500l2.500-1.500L40.500 35a4.600 4.600 0 0 1-8.500 3.500z" fill="url(#cone)"/><circle cx="36" cy="38.500" r="4.300" fill="#e4e4e4" stroke="#b0b0b0" stroke-width=".6"/><path d="M31 33l7-3" stroke="#a0a0a0" stroke-width=".8"/><path d="M18 9.500L28 5" stroke="#a4a4a4" stroke-width="1.600" stroke-linecap="round"/><path d="M10.500 14L19.500 9.800" stroke="#cfcfcf" stroke-width="6.500" stroke-linecap="round"/><path d="M10.800 15.800L20 11.500" stroke="#a4a4a4" stroke-width="2.500" stroke-linecap="round" opacity=".6"/><circle cx="49.500" cy="46.500" r="7" fill="#f0f0f0" stroke="#8e8e8e" stroke-width="1"/><circle cx="49.500" cy="46.500" r="5.300" fill="#d0d0d0"/><path d="M47.800 42.500h3.400v3.600h2.600L49.500 51l-4.300-4.900h2.600z" fill="#3c3c3c"/></svg>
<div class="abs" style="left:1190px;top:504px;width:14px;height:40px;background:repeating-linear-gradient(#b9dbe4 0,#b9dbe4 2.400px,#fff 2.400px,#fff 3.330px)"></div>
<div class="s7" style="left:783px;top:732px;width:93px;height:21px"></div>
<div class="t" style="left:802px;top:736px;transform:none;font-size:12px;letter-spacing:-0.00px;color:#838383">Configurer</div>
<div class="s7" style="left:1047px;top:732px;width:88px;height:21px"></div>
<div class="abs" style="left:1120px;top:735px;width:1px;height:15px;background:#c0c0c0"></div>
<div class="abs" style="left:1123px;top:740px;width:0px;height:0px;border:4px solid transparent;border-top:5px solid #8a8a8a;border-bottom:0"></div>
<div class="t" style="left:1057px;top:736px;transform:none;font-size:12px;letter-spacing:-0.24px;color:#838383">Par défaut</div>
<div class="s7" style="left:1143px;top:732px;width:73px;height:21px"></div>
<div class="t" style="left:1153px;top:736px;transform:none;font-size:12px;letter-spacing:-0.27px;color:#838383">Propriétés</div>
<div class="s7" style="left:1000px;top:781px;width:73px;height:21px;border-color:#3c7fb1;box-shadow:inset 0 0 0 1px #48d8fb;background:linear-gradient(#f0f8fc 0,#e0f0fa 48%,#c8e6f6 52%,#b8dcf2 100%)"></div>
<div class="t" style="left:1028px;top:785px;transform:none;font-size:12px;letter-spacing:0.08px;">OK</div>
<div class="s7" style="left:1081px;top:781px;width:73px;height:21px;border-color:#707070;background:linear-gradient(#f2f2f2 0,#ebebeb 48%,#dddddd 52%,#cfcfcf 100%)"></div>
<div class="t" style="left:1098px;top:785px;transform:none;font-size:12px;letter-spacing:-0.48px;">Annuler</div>
<div class="s7" style="left:1162px;top:781px;width:73px;height:21px"></div>
<div class="t" style="left:1175px;top:785px;transform:none;font-size:12px;letter-spacing:-0.41px;color:#838383">Appliquer</div>
<!-- ===== bottom dock ===== -->
<div class="abs" style="left:467px;top:795px;width:667px;height:61px;border-radius:6px;background:rgba(255,255,255,.2);border:1px solid rgba(255,255,255,.5);box-shadow:0 0 3px rgba(0,0,0,.3)"></div>
<div class="abs" style="left:997px;top:796px;width:1px;height:59px;background:rgba(40,30,30,.7)"></div>
<svg class="abs" style="left:473px;top:800px" width="52" height="50" viewBox="0 0 52 50"><defs><radialGradient id="gb" cx=".4" cy=".3" r=".8"><stop offset="0" stop-color="#6cc44c"/><stop offset="1" stop-color="#2a7e1c"/></radialGradient></defs><path d="M26 3c13 0 22 8 22 18s-9 18-22 18c-3 0-5 0-8-1l-10 9 3-12C6 32 4 27 4 21 4 11 13 3 26 3z" fill="url(#gb)"/><rect x="2" y="12" width="46" height="24" fill="#efe9d8" stroke="#b8b098" stroke-width=".6" transform="rotate(-1 25 24)"/><rect x="40" y="14" width="6" height="7" fill="#c83a2a" transform="rotate(-1 25 24)"/><circle cx="35" cy="18" r="3" fill="none" stroke="#999" stroke-width=".6"/><g stroke="#8a8472" stroke-width=".8"><path d="M13 22h16M13 25h20M13 28h14M13 31h6"/></g></svg>
<svg class="abs" style="left:541px;top:801px" width="46" height="46" viewBox="0 0 46 46"><defs><radialGradient id="ge" cx=".38" cy=".3" r=".75"><stop offset="0" stop-color="#4a78d8"/><stop offset=".45" stop-color="#16308a"/><stop offset="1" stop-color="#040828"/></radialGradient></defs><ellipse cx="23" cy="43" rx="16" ry="2.500" fill="#000" opacity=".35"/><circle cx="23" cy="22" r="21" fill="url(#ge)"/><path d="M10 8c5-4 10-3 13-1 2 2-1 4-3 6s-1 5-4 6-3 5-6 4-4-7-3-10 1-3 3-5z" fill="#9aa468"/><path d="M12 9c4-3 8-2 10-1-2 3-5 3-6 6s-4 3-5 1 0-4 1-6z" fill="#3a6e34"/><path d="M24 24c3-2 7-1 9 2s1 7-1 10-5 6-7 4-1-6-2-9-1-5 1-7z" fill="#3f7a34"/><path d="M26 26c3-1 5 0 6 2s0 5-2 7-3 1-3-2-2-5-1-7z" fill="#8fa060"/><path d="M30 6c3 1 6 3 8 6l-4 1-3-3z" fill="#dde"/><ellipse cx="17" cy="11" rx="10" ry="6" fill="#fff" opacity=".18"/></svg>
<svg class="abs" style="left:605px;top:801px" width="50" height="48" viewBox="0 0 50 48"><rect x="5" y="16" width="28" height="24" fill="#3f9a3a" stroke="#e8f0e0" stroke-width="1.500" transform="rotate(-24 19 28)"/><rect x="24" y="18" width="22" height="20" fill="#f0c030" stroke="#f4f0e0" stroke-width="1.500" transform="rotate(14 35 28)"/><g transform="rotate(-3 27 22)"><rect x="13" y="2" width="28" height="38" fill="#fff" stroke="#ccc" stroke-width=".7"/><rect x="15" y="4" width="24" height="17" fill="#9cc8ea"/><rect x="15" y="21" width="24" height="7" fill="#4aa0b8"/><rect x="15" y="27" width="24" height="10" fill="#e8dcc0"/><path d="M15 16q12-17 24-1q-12-5-24 1z" fill="#d82a1a"/><path d="M27 8v22" stroke="#7a5a3a" stroke-width=".8"/><path d="M22 31l8-5 2 1-8 5z" fill="#7a5a3a"/></g></svg>
<svg class="abs" style="left:672px;top:800px" width="50" height="52" viewBox="0 0 50 52"><defs><linearGradient id="hp" x1="0" x2="1"><stop offset="0" stop-color="#eee"/><stop offset=".5" stop-color="#666"/><stop offset="1" stop-color="#ddd"/></linearGradient></defs><path d="M5 32C3 14 12 4 25 4s22 10 20 28" fill="none" stroke="#1c1c1c" stroke-width="4.500"/><path d="M7 28C7 14 14 7.500 25 7.500S43 14 43 28" fill="none" stroke="#d0d0d0" stroke-width="1.600"/><rect x="2" y="25" width="12" height="24" rx="5" fill="url(#hp)" stroke="#222" stroke-width="1" transform="rotate(8 8 37)"/><rect x="36" y="25" width="12" height="24" rx="5" fill="url(#hp)" stroke="#222" stroke-width="1" transform="rotate(-8 42 37)"/><rect x="9" y="29" width="5" height="17" rx="2" fill="#111" transform="rotate(8 8 37)"/><rect x="36" y="29" width="5" height="17" rx="2" fill="#111" transform="rotate(-8 42 37)"/></svg>
<svg class="abs" style="left:735px;top:802px" width="52" height="46" viewBox="0 0 52 46"><defs><radialGradient id="fr" cx=".4" cy=".3" r=".8"><stop offset="0" stop-color="#fff0b0"/><stop offset=".5" stop-color="#e0a020"/><stop offset="1" stop-color="#8a5008"/></radialGradient></defs><path d="M30 30l20-10v10l-16 8z" fill="#2a5a18"/><path d="M36 30l4-2v5l-4 2zM43 26l4-2v5l-4 2z" fill="#8ad040"/><circle cx="21" cy="22" r="19" fill="url(#fr)" stroke="#6a3c04" stroke-width="1"/><g fill="#1a0e04"><circle cx="21" cy="10" r="5"/><circle cx="32.400" cy="18.300" r="5"/><circle cx="28" cy="31.700" r="5"/><circle cx="14" cy="31.700" r="5"/><circle cx="9.600" cy="18.300" r="5"/><circle cx="21" cy="22" r="2.500"/></g></svg>
<svg class="abs" style="left:804px;top:803px" width="48" height="46" viewBox="0 0 48 46"><rect x="6" y="8" width="26" height="34" fill="#e8e8e8" stroke="#b0b0b0" stroke-width=".7" transform="rotate(-10 19 25)"/><rect x="14" y="3" width="28" height="38" fill="#fff" stroke="#bbb" stroke-width=".7"/><g stroke="#a8b0c0" stroke-width="1"><path d="M18 10h12M18 14h20M18 18h20M18 22h20M18 26h14"/></g><rect x="34" y="6" width="5" height="2" fill="#557"/><path d="M8 22a8 8 0 1 0 8 8h-8z" fill="#e8b030"/><path d="M8 22a8 8 0 0 1 8 8h-8z" fill="#4aa0d8"/><path d="M8 30l-6 5a8 8 0 0 0 8 3z" fill="#7ab840"/><path d="M44 6l3 3-30 32-6 3 2-6z" fill="#a06a30" stroke="#5a3a18" stroke-width=".7"/><path d="M13 38l4 3-6 3z" fill="#e8d0a0"/></svg>
<svg class="abs" style="left:870px;top:800px" width="50" height="54" viewBox="0 0 50 54"><defs><linearGradient id="lk" x1="0" x2="1"><stop offset="0" stop-color="#6a3a10"/><stop offset=".45" stop-color="#f0c860"/><stop offset="1" stop-color="#5a2e0a"/></linearGradient><linearGradient id="sh" x1="0" x2="1"><stop offset="0" stop-color="#888"/><stop offset=".4" stop-color="#f4f4f4"/><stop offset="1" stop-color="#777"/></linearGradient></defs><path d="M13 26V15a12 12 0 0 1 24 0v11" fill="none" stroke="url(#sh)" stroke-width="5"/><path d="M8 26l17-4 17 4v20l-17 6-17-6z" fill="url(#lk)" stroke="#3a1c06" stroke-width=".8"/><g stroke="#5a2c0a" stroke-width="2.200" opacity=".75"><path d="M8 31l17 5 17-5M8 36l17 5 17-5M8 41l17 5 17-5"/></g><path d="M8 26l17 5 17-5" fill="none" stroke="#fbe8a0" stroke-width="1.500"/></svg>
<svg class="abs" style="left:936px;top:805px" width="46" height="44" viewBox="0 0 46 44"><rect x="2" y="3" width="38" height="36" rx="2" fill="#f4f4f4" stroke="#c0c0c0" stroke-width=".8"/><rect x="37" y="5" width="7" height="34" fill="#2a80d0"/><rect x="39" y="17" width="3" height="8" fill="#fff" opacity=".7"/><rect x="2" y="3" width="38" height="8" rx="2" fill="#fff"/><rect x="2" y="36" width="38" height="4" fill="#d0d0d0"/><text x="21" y="33" text-anchor="middle" font-family="Liberation Sans" font-weight="bold" font-size="29" fill="#3a3a3a">?</text></svg>
<svg class="abs" style="left:1012px;top:802px" width="48" height="52" viewBox="0 0 48 52"><path d="M6 4l4-3h28l4 3v40l-3 3H9l-3-3z" fill="#161616" stroke="#444" stroke-width=".8"/><rect x="6" y="4" width="36" height="2" fill="#777"/><rect x="18" y="0" width="12" height="3" fill="#bbb"/><rect x="8" y="41" width="32" height="4" fill="#e02020"/><rect x="8" y="45" width="32" height="2" fill="#ff9090" opacity=".7"/><text x="24" y="34" text-anchor="middle" font-family="DejaVu Sans" font-size="27" fill="#dcdcdc">♻</text></svg>
<svg class="abs" style="left:1080px;top:800px" width="48" height="52" viewBox="0 0 48 52"><defs><radialGradient id="cp" cx=".4" cy=".35" r=".7"><stop offset="0" stop-color="#b8b8b8"/><stop offset=".55" stop-color="#5a5a5a"/><stop offset="1" stop-color="#262626"/></radialGradient></defs><path d="M36 8l5-5 3 3-5 5z" fill="#999" stroke="#444" stroke-width=".6"/><circle cx="42" cy="4" r="2.600" fill="#ccc" stroke="#555" stroke-width=".6"/><circle cx="23" cy="28" r="21" fill="#2a2a2a"/><circle cx="23" cy="28" r="19.500" fill="none" stroke="#d0d0d0" stroke-width="2.200"/><circle cx="23" cy="28" r="16" fill="url(#cp)"/><g stroke="#eee" stroke-width=".8"><path d="M23 13v4M23 39v4M8 28h4M34 28h4M12.400 17.400l2.800 2.800M30.800 35.800l2.800 2.800M12.400 38.600l2.800-2.800M30.800 20.200l2.800-2.800"/></g><path d="M26 16l-1 12h-4z" fill="#e03020"/><path d="M20 40l1-12h4z" fill="#f4f4f4"/></svg>
<!-- ===== taskbar ===== -->
<div class="abs" style="left:0px;top:860px;width:1600px;height:40px;background:linear-gradient(90deg,#2c1210 0,#2a1110 60px,#301310 130px,#43170f 300px,#5c1c12 390px,#57190f 450px,#3c1712 520px,#2c1817 580px,#30201e 780px,#3a2a28 830px,#2a1716 900px,#221110 1100px,#1d0d0c 1600px);border-top:1px solid #1a0a08;box-shadow:inset 0 1px 0 rgba(255,255,255,.28),inset 0 2px 0 rgba(255,255,255,.08)"></div>
<div class="abs" style="left:0px;top:861px;width:1600px;height:18px;background:linear-gradient(rgba(255,255,255,.10),rgba(255,255,255,.02))"></div>
<svg class="abs" style="left:0px;top:861px" width="52" height="40" viewBox="0 0 52 40"><defs><radialGradient id="orb" cx=".5" cy=".78" r=".75"><stop offset="0" stop-color="#7fe6ff"/><stop offset=".35" stop-color="#1ea8f0"/><stop offset=".8" stop-color="#0a5ab8"/><stop offset="1" stop-color="#06306a"/></radialGradient><radialGradient id="wing" cx=".5" cy=".5" r=".5"><stop offset="0" stop-color="#8fe0ff" stop-opacity=".9"/><stop offset="1" stop-color="#8fe0ff" stop-opacity="0"/></radialGradient></defs><ellipse cx="26" cy="20" rx="26" ry="6" fill="url(#wing)"/><circle cx="26" cy="21" r="19.500" fill="#082048"/><circle cx="26" cy="21" r="18" fill="url(#orb)" stroke="#a8e4ff" stroke-width="1.200"/><g transform="rotate(-8 26 21)"><path d="M17 12.500q4.500-2.500 8.500-.5v8q-4-2-8.500.5z" fill="#f0602a"/><path d="M27 12q4 2 8.500-1v8q-4.500 3-8.500 1z" fill="#8cd030"/><path d="M17 22q4.500-2.500 8.500-.5v8q-4-2-8.500.5z" fill="#38a8f8"/><path d="M27 21.500q4 2 8.500-1v8q-4.500 3-8.500 1z" fill="#fad030"/></g><path d="M9.500 15a18 18 0 0 1 33 0q-16.500-8-33 0z" fill="#fff" opacity=".4"/></svg>
<div class="abs" style="left:58px;top:866px;width:1px;height:1px;background:#8a7a78;box-shadow:0px 3px #8a7a78,0px 6px #8a7a78,0px 9px #8a7a78,0px 12px #8a7a78,0px 15px #8a7a78,0px 18px #8a7a78,0px 21px #8a7a78,0px 24px #8a7a78,0px 27px #8a7a78,3px 0px #8a7a78,3px 3px #8a7a78,3px 6px #8a7a78,3px 9px #8a7a78,3px 12px #8a7a78,3px 15px #8a7a78,3px 18px #8a7a78,3px 21px #8a7a78,3px 24px #8a7a78,3px 27px #8a7a78,6px 0px #8a7a78,6px 3px #8a7a78,6px 6px #8a7a78,6px 9px #8a7a78,6px 12px #8a7a78,6px 15px #8a7a78,6px 18px #8a7a78,6px 21px #8a7a78,6px 24px #8a7a78,6px 27px #8a7a78"></div>
<svg class="abs" style="left:91px;top:864px" width="28" height="32" viewBox="0 0 28 32"><defs><radialGradient id="ff" cx=".5" cy=".55" r=".6"><stop offset="0" stop-color="#ffd040"/><stop offset=".55" stop-color="#e85a10"/><stop offset="1" stop-color="#7a1804" stop-opacity=".2"/></radialGradient></defs><path d="M3 12q1-9 6-8 1-4 5-3 4-2 6 2 5-1 5 9z" fill="url(#ff)"/><circle cx="14" cy="13" r="8" fill="#16243a"/><path d="M9 9q4-3 7 0t-1 5-5 2-1-7z" fill="#2c5a3a"/><path d="M15 14q4 0 5 3l-4 3z" fill="#3a6a9a"/><path d="M1 14l13 7 13-7v9l-13 8-13-8z" fill="#3a78c0"/><path d="M1 14l13 7v10l-13-8z" fill="#4a9040"/><path d="M14 21v10" stroke="#e8e8e8" stroke-width="1.600"/><path d="M1 14l13 7 13-7" fill="none" stroke="#d8dce0" stroke-width="1.600"/></svg>
<div class="abs" style="left:138px;top:861px;width:58px;height:38px;border-radius:3px;border:1px solid rgba(255,255,255,0.37);background:linear-gradient(rgba(255,255,255,0.37) 0,rgba(255,255,255,0.2) 45%,rgba(255,255,255,0.09999999999999999) 50%,rgba(255,255,255,0.22) 100%);box-shadow:0 0 0 1px rgba(0,0,0,.5)"></div>
<svg class="abs" style="left:150px;top:865px" width="34" height="32" viewBox="0 0 34 32"><rect x="4" y="3" width="24" height="22" fill="#1a1a1a" stroke="#555" stroke-width=".8" transform="rotate(-8 16 14)"/><rect x="6" y="5" width="22" height="20" fill="#4a8ac8" stroke="#222" stroke-width="1"/><rect x="6" y="16" width="22" height="9" fill="#3a6a38"/><circle cx="19" cy="19" r="9" fill="#b8d0e8" stroke="#667" stroke-width="1.500"/><circle cx="19" cy="19" r="5" fill="#e8f0f8"/><path d="M15 17q4-3 8 0" stroke="#7a9ac0" stroke-width="1.500" fill="none"/></svg>
<svg class="abs" style="left:212px;top:864px" width="34" height="34" viewBox="0 0 34 34"><defs><radialGradient id="pl" cx=".5" cy=".4" r=".6"><stop offset="0" stop-color="#1a4a58"/><stop offset="1" stop-color="#04141a"/></radialGradient></defs><circle cx="17" cy="17" r="15.500" fill="url(#pl)" stroke="#0a8a9a" stroke-width="1.200"/><circle cx="17" cy="17" r="13" fill="none" stroke="#053a44" stroke-width="1"/><path d="M12 9l14 8-14 8z" fill="#38d8e8"/><path d="M12 9l14 8h-14z" fill="#a8f4fa" opacity=".6"/></svg>
<div class="abs" style="left:262px;top:861px;width:58px;height:38px;border-radius:3px;border:1px solid rgba(255,255,255,0.37);background:linear-gradient(rgba(255,255,255,0.37) 0,rgba(255,255,255,0.2) 45%,rgba(255,255,255,0.09999999999999999) 50%,rgba(255,255,255,0.22) 100%);box-shadow:0 0 0 1px rgba(0,0,0,.5)"></div>
<svg class="abs" style="left:275px;top:864px" width="32" height="32" viewBox="0 0 32 32"><rect x="1" y="1" width="30" height="30" fill="#d0c8c8" stroke="#fff" stroke-width="1"/><rect x="3" y="3" width="26" height="26" fill="#2a2a2a"/><circle cx="15" cy="17" r="11" fill="#111" stroke="#444" stroke-width="1"/><circle cx="15" cy="17" r="4.500" fill="#e02838"/><circle cx="15" cy="17" r="1" fill="#fff"/><path d="M26 5v14l-4 6" stroke="#ccc" stroke-width="1.500" fill="none"/></svg>
<div class="abs" style="left:324px;top:861px;width:58px;height:38px;border-radius:3px;border:1px solid rgba(255,255,255,0.8);background:linear-gradient(rgba(255,255,255,0.8) 0,rgba(255,255,255,0.63) 45%,rgba(255,255,255,0.53) 50%,rgba(255,255,255,0.65) 100%);box-shadow:0 0 0 1px rgba(0,0,0,.5)"></div>
<svg class="abs" style="left:337px;top:864px" width="34" height="34" viewBox="0 0 34 34"><defs><radialGradient id="spk" cx=".4" cy=".4" r=".7"><stop offset="0" stop-color="#fff"/><stop offset="1" stop-color="#9aa0a8"/></radialGradient></defs><path d="M22 2l6 4v22l-6 4z" fill="#a8aeb4"/><ellipse cx="15" cy="17" rx="13" ry="15" fill="url(#spk)" stroke="#8a9098" stroke-width="1"/><ellipse cx="14" cy="17" rx="8" ry="10" fill="#c8ccd2" stroke="#9aa0a8" stroke-width="1"/><ellipse cx="13" cy="17" rx="3.500" ry="4.500" fill="#e8eaee" stroke="#888" stroke-width=".8"/></svg>
<div class="abs" style="left:1318px;top:866px;width:1px;height:1px;background:#6a5a58;box-shadow:0px 3px #6a5a58,0px 6px #6a5a58,0px 9px #6a5a58,0px 12px #6a5a58,0px 15px #6a5a58,0px 18px #6a5a58,0px 21px #6a5a58,0px 24px #6a5a58,0px 27px #6a5a58,3px 0px #6a5a58,3px 3px #6a5a58,3px 6px #6a5a58,3px 9px #6a5a58,3px 12px #6a5a58,3px 15px #6a5a58,3px 18px #6a5a58,3px 21px #6a5a58,3px 24px #6a5a58,3px 27px #6a5a58,6px 0px #6a5a58,6px 3px #6a5a58,6px 6px #6a5a58,6px 9px #6a5a58,6px 12px #6a5a58,6px 15px #6a5a58,6px 18px #6a5a58,6px 21px #6a5a58,6px 24px #6a5a58,6px 27px #6a5a58"></div>
<div class="t" style="left:1336px;top:870px;transform:none;font-size:11px;letter-spacing:-0.58px;color:#fff">FR</div>
<div class="abs" style="left:1366px;top:879px;width:0px;height:0px;border:4px solid transparent;border-bottom:5px solid #fff;border-top:0"></div>
<svg class="abs" style="left:1384px;top:871px" width="20" height="20" viewBox="0 0 20 20"><rect x="5" y="1" width="6" height="5" fill="#bbb"/><rect x="3" y="5" width="10" height="9" rx="1" fill="#999" stroke="#ddd" stroke-width=".6"/><rect x="6" y="14" width="4" height="4" fill="#888"/><circle cx="14" cy="13" r="5" fill="#28a838" stroke="#dfd" stroke-width=".8"/><path d="M11.500 13l2 2 3-4" stroke="#fff" stroke-width="1.500" fill="none"/></svg>
<svg class="abs" style="left:1414px;top:872px" width="20" height="18" viewBox="0 0 20 18"><path d="M3 1v16" stroke="#fff" stroke-width="1.600"/><path d="M4 2q4-2 7 1t6 0v8q-3 2-6 0t-7 0z" fill="#fff"/></svg>
<svg class="abs" style="left:1439px;top:872px" width="20" height="18" viewBox="0 0 20 18"><rect x="2" y="4" width="9" height="12" fill="none" stroke="#fff" stroke-width="1.500"/><rect x="4" y="2" width="5" height="2" fill="#fff"/><path d="M9 3h8v5q0 3-4 3t-4-3z" fill="#fff" stroke="#1a0a08" stroke-width=".8"/><path d="M11 0v3M15 0v3M13 11v5" stroke="#fff" stroke-width="1.500"/></svg>
<svg class="abs" style="left:1463px;top:872px" width="20" height="18" viewBox="0 0 20 18"><g fill="#9a8a88"><rect x="1" y="12" width="2" height="3"/><rect x="4" y="10" width="2" height="5"/><rect x="7" y="7" width="2" height="8"/><rect x="10" y="4" width="2" height="11"/><rect x="13" y="1" width="2" height="14"/></g><path d="M7 8l8 8M15 8l-8 8" stroke="#e02020" stroke-width="2"/></svg>
<svg class="abs" style="left:1487px;top:871px" width="20" height="20" viewBox="0 0 20 20"><path d="M2 7h3l5-5v16l-5-5H2z" fill="#fff"/><path d="M12 7q2 3 0 6M14.500 4.500q4 5.500 0 11" stroke="#fff" stroke-width="1.300" fill="none"/></svg>
<div class="t" style="left:1534px;top:866px;transform:none;font-size:12px;letter-spacing:-0.41px;color:#fff">20:39</div>
<div class="t" style="left:1518px;top:883px;transform:none;font-size:12px;letter-spacing:-0.21px;color:#fff">10/05/2010</div>
<div class="abs" style="left:1586px;top:861px;width:14px;height:39px;border:1px solid #7a6a68;border-right:0;background:linear-gradient(90deg,rgba(255,255,255,.35),rgba(255,255,255,.05))"></div>
<div class="abs" style="left:1588px;top:846px;width:2px;height:2px;background:#a0a0a0;box-shadow:4px 0 #a0a0a0,8px 0 #a0a0a0,4px -4px #a0a0a0,8px -4px #a0a0a0,8px -8px #a0a0a0,0 4px #a0a0a0,4px 4px #a0a0a0,8px 4px #a0a0a0"></div>
</body>
</html>
